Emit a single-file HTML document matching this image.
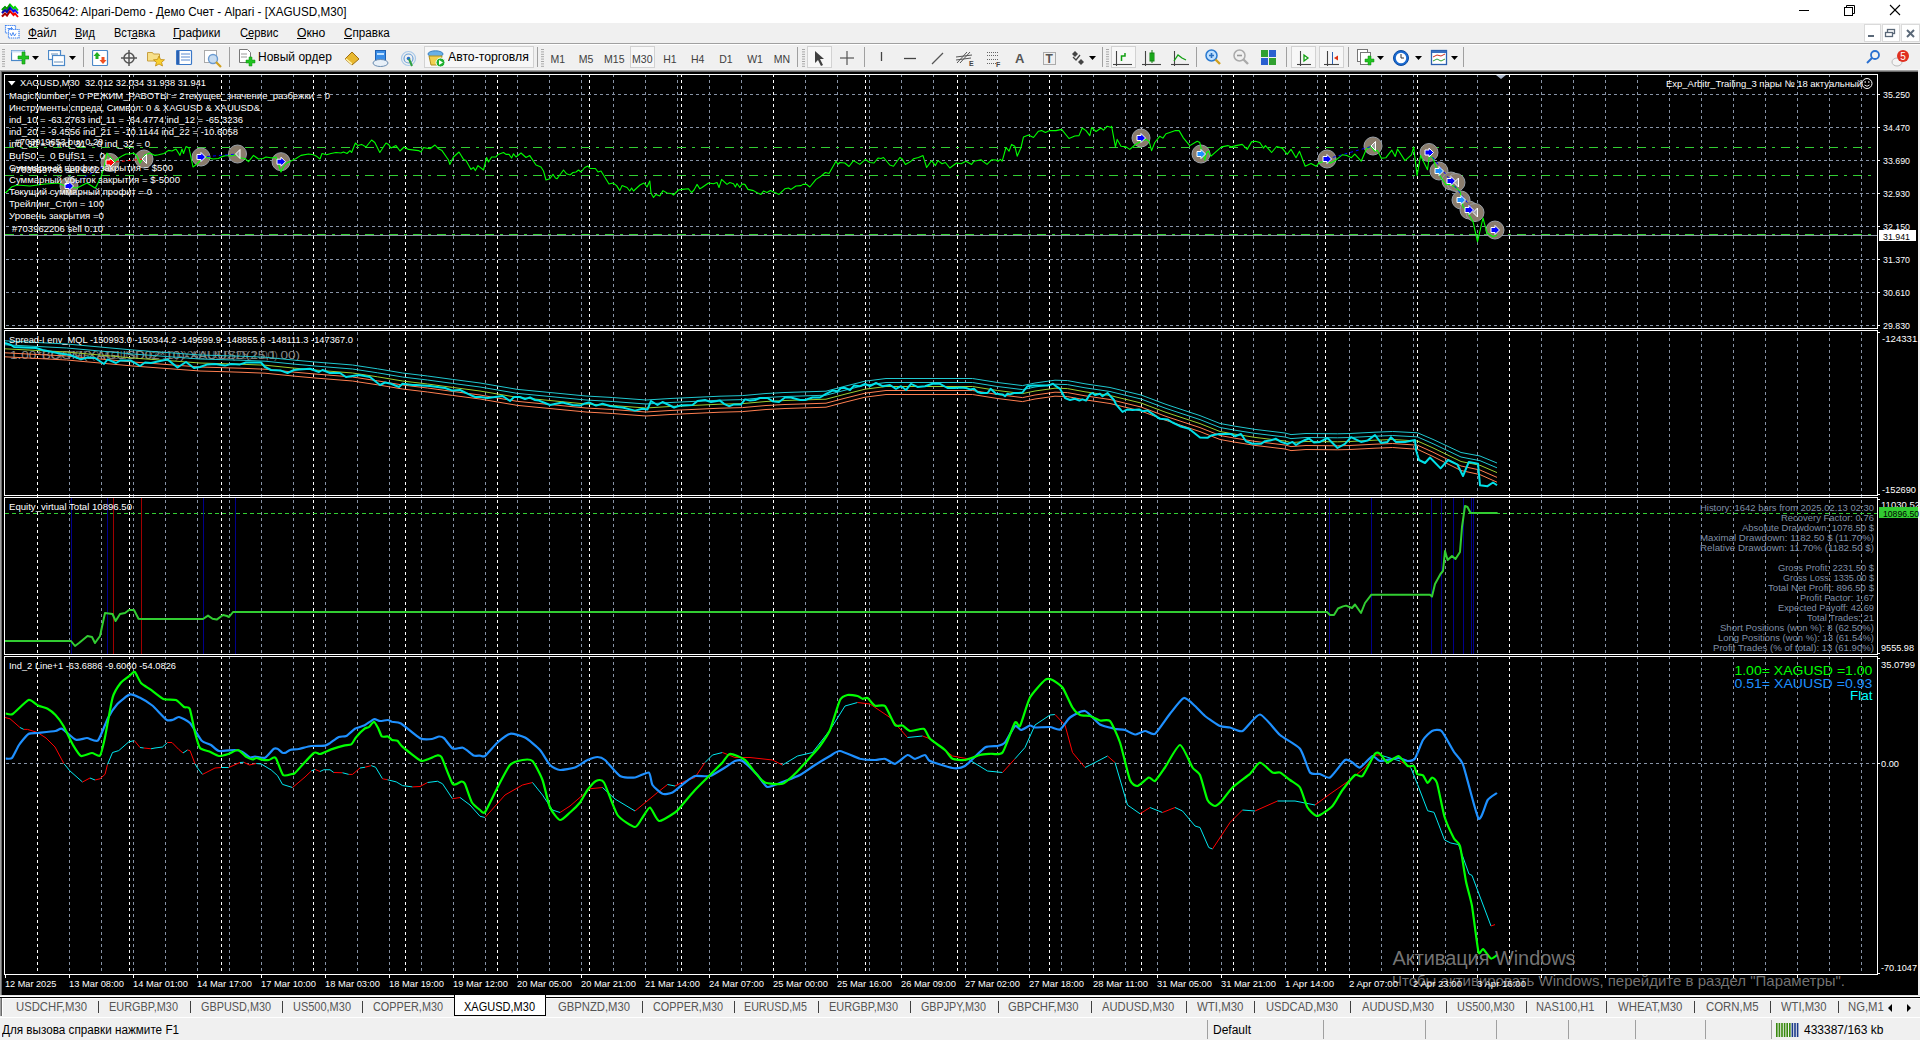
<!DOCTYPE html>
<html><head><meta charset="utf-8"><title>MT4</title>
<style>html,body{margin:0;padding:0;width:1920px;height:1040px;overflow:hidden;background:#f0f0f0;font-family:"Liberation Sans",sans-serif}
svg{display:block} text{white-space:pre}</style></head><body>

<div style="position:absolute;left:0;top:0;width:1920px;height:23px;background:#fff;"></div>
<svg style="position:absolute;left:0px;top:0px" width="22" height="22" viewBox="0 0 22 22">
 <polyline points="2,10 5,7 7,9 10,4.5 13.5,8.5 15,7 18,10.5" fill="none" stroke="#00d800" stroke-width="1.9"/>
 <polyline points="2,13 5,10 7,12 10,7.5 13.5,11.5 15,10 18,13.5" fill="none" stroke="#1010f0" stroke-width="1.9"/>
 <polyline points="2,16.5 5,13.5 7,15.5 10,11 13.5,15 15,13.5 18,17" fill="none" stroke="#f00000" stroke-width="1.9"/>
 <polyline points="2,10 5,7 7,9 10,4.5" fill="none" stroke="#006a00" stroke-width="1.9" stroke-opacity="0.6"/>
 <polyline points="2,13 5,10 7,12 10,7.5" fill="none" stroke="#000070" stroke-width="1.9" stroke-opacity="0.6"/>
 <polyline points="2,16.5 5,13.5 7,15.5 10,11" fill="none" stroke="#700000" stroke-width="1.9" stroke-opacity="0.6"/>
</svg>
<div style="position:absolute;left:23px;top:5px;font:12px 'Liberation Sans', sans-serif;color:#000;white-space:nowrap;transform-origin:0 0;transform:scaleX(0.973)">16350642: Alpari-Demo - Демо Счет - Alpari - [XAGUSD,M30]</div>
<svg style="position:absolute;left:1798px;top:4px" width="14" height="14"><line x1="1" y1="6.5" x2="11" y2="6.5" stroke="#000" stroke-width="1"/></svg>
<svg style="position:absolute;left:1843px;top:4px" width="14" height="14"><rect x="1.5" y="3.5" width="8" height="8" fill="none" stroke="#000"/><polyline points="3.5,3.5 3.5,1.5 11.5,1.5 11.5,9.5 9.5,9.5" fill="none" stroke="#000"/></svg>
<svg style="position:absolute;left:1889px;top:4px" width="14" height="14"><line x1="1" y1="1" x2="11" y2="11" stroke="#000" stroke-width="1.1"/><line x1="11" y1="1" x2="1" y2="11" stroke="#000" stroke-width="1.1"/></svg>

<div style="position:absolute;left:0;top:23px;width:1920px;height:20px;background:#f0f0f0;"></div>
<div style="position:absolute;left:0;top:43px;width:1920px;height:1px;background:#a0a0a0;"></div>
<svg style="position:absolute;left:4px;top:24px" width="16" height="16" viewBox="0 0 16 16">
<rect x="1.5" y="1.5" width="10" height="7.5" fill="#fff" stroke="#3a80f0" stroke-width="1.2" stroke-dasharray="1.3 0.7"/>
<rect x="4.5" y="5.5" width="10.5" height="8.5" fill="#fff" stroke="#3a80f0" stroke-width="1.2" stroke-dasharray="1.3 0.7"/>
<path d="M3.5 4.5h5M7 3l1.5 1.5L7 6" fill="none" stroke="#3a80f0" stroke-width="0.9"/>
<polyline points="6,9 7.5,12 9,8.5 10.5,12 12,9.5" fill="none" stroke="#3a80f0" stroke-width="0.9"/>
</svg>
<div style="position:absolute;left:28px;top:26px;font:12px 'Liberation Sans', sans-serif;color:#000;white-space:nowrap;transform-origin:0 0;transform:scaleX(0.972)">Файл</div>
<div style="position:absolute;left:75px;top:26px;font:12px 'Liberation Sans', sans-serif;color:#000;white-space:nowrap;transform-origin:0 0;transform:scaleX(0.912)">Вид</div>
<div style="position:absolute;left:113.5px;top:26px;font:12px 'Liberation Sans', sans-serif;color:#000;white-space:nowrap;transform-origin:0 0;transform:scaleX(0.921)">Вставка</div>
<div style="position:absolute;left:173px;top:26px;font:12px 'Liberation Sans', sans-serif;color:#000;white-space:nowrap;transform-origin:0 0;transform:scaleX(0.994)">Графики</div>
<div style="position:absolute;left:239.6px;top:26px;font:12px 'Liberation Sans', sans-serif;color:#000;white-space:nowrap;transform-origin:0 0;transform:scaleX(0.935)">Сервис</div>
<div style="position:absolute;left:297px;top:26px;font:12px 'Liberation Sans', sans-serif;color:#000;white-space:nowrap;transform-origin:0 0;transform:scaleX(1.018)">Окно</div>
<div style="position:absolute;left:343.75px;top:26px;font:12px 'Liberation Sans', sans-serif;color:#000;white-space:nowrap;transform-origin:0 0;transform:scaleX(0.974)">Справка</div>
<div style="position:absolute;left:28px;top:38px;width:9px;height:1px;background:#000"></div>
<div style="position:absolute;left:75px;top:38px;width:7px;height:1px;background:#000"></div>
<div style="position:absolute;left:131px;top:38px;width:6px;height:1px;background:#000"></div>
<div style="position:absolute;left:173px;top:38px;width:7px;height:1px;background:#000"></div>
<div style="position:absolute;left:246px;top:38px;width:7px;height:1px;background:#000"></div>
<div style="position:absolute;left:297px;top:38px;width:9px;height:1px;background:#000"></div>
<div style="position:absolute;left:344px;top:38px;width:8px;height:1px;background:#000"></div>
<div style="position:absolute;left:1864px;top:24px;width:17px;height:18px;border:1px solid #dadada;background:#fff;box-sizing:border-box"></div>
<div style="position:absolute;left:1882px;top:24px;width:18px;height:18px;border:1px solid #dadada;background:#fff;box-sizing:border-box"></div>
<div style="position:absolute;left:1901px;top:24px;width:19px;height:18px;border:1px solid #dadada;background:#fff;box-sizing:border-box"></div>
<svg style="position:absolute;left:1860px;top:24px" width="60" height="18"><rect x="8" y="11" width="6" height="2" fill="#5a6878"/><rect x="27.5" y="5.5" width="7" height="4" fill="none" stroke="#5a6878" stroke-width="1.3"/><rect x="25.5" y="8.5" width="7" height="4" fill="#fff" stroke="#5a6878" stroke-width="1.3"/><line x1="47" y1="6" x2="54" y2="13" stroke="#5a6878" stroke-width="2"/><line x1="54" y1="6" x2="47" y2="13" stroke="#5a6878" stroke-width="2"/></svg>
<div style="position:absolute;left:0;top:44px;width:1920px;height:26px;background:#f0f0f0;"></div>
<div style="position:absolute;left:0;top:44px;width:1920px;height:1px;background:#fff;"></div>
<div style="position:absolute;left:0;top:69px;width:1920px;height:1px;background:#f5f5f5;"></div>
<svg style="position:absolute;left:2px;top:48px" width="4" height="20"><line x1="0" y1="1.5" x2="3" y2="1.5" stroke="#a8a8a8"/><line x1="0" y1="3.9" x2="3" y2="3.9" stroke="#a8a8a8"/><line x1="0" y1="6.3" x2="3" y2="6.3" stroke="#a8a8a8"/><line x1="0" y1="8.7" x2="3" y2="8.7" stroke="#a8a8a8"/><line x1="0" y1="11.1" x2="3" y2="11.1" stroke="#a8a8a8"/><line x1="0" y1="13.5" x2="3" y2="13.5" stroke="#a8a8a8"/><line x1="0" y1="15.899999999999999" x2="3" y2="15.899999999999999" stroke="#a8a8a8"/><line x1="0" y1="18.3" x2="3" y2="18.3" stroke="#a8a8a8"/></svg>
<svg style="position:absolute;left:541px;top:48px" width="4" height="20"><line x1="0" y1="1.5" x2="3" y2="1.5" stroke="#a8a8a8"/><line x1="0" y1="3.9" x2="3" y2="3.9" stroke="#a8a8a8"/><line x1="0" y1="6.3" x2="3" y2="6.3" stroke="#a8a8a8"/><line x1="0" y1="8.7" x2="3" y2="8.7" stroke="#a8a8a8"/><line x1="0" y1="11.1" x2="3" y2="11.1" stroke="#a8a8a8"/><line x1="0" y1="13.5" x2="3" y2="13.5" stroke="#a8a8a8"/><line x1="0" y1="15.899999999999999" x2="3" y2="15.899999999999999" stroke="#a8a8a8"/><line x1="0" y1="18.3" x2="3" y2="18.3" stroke="#a8a8a8"/></svg>
<svg style="position:absolute;left:802px;top:48px" width="4" height="20"><line x1="0" y1="1.5" x2="3" y2="1.5" stroke="#a8a8a8"/><line x1="0" y1="3.9" x2="3" y2="3.9" stroke="#a8a8a8"/><line x1="0" y1="6.3" x2="3" y2="6.3" stroke="#a8a8a8"/><line x1="0" y1="8.7" x2="3" y2="8.7" stroke="#a8a8a8"/><line x1="0" y1="11.1" x2="3" y2="11.1" stroke="#a8a8a8"/><line x1="0" y1="13.5" x2="3" y2="13.5" stroke="#a8a8a8"/><line x1="0" y1="15.899999999999999" x2="3" y2="15.899999999999999" stroke="#a8a8a8"/><line x1="0" y1="18.3" x2="3" y2="18.3" stroke="#a8a8a8"/></svg>
<svg style="position:absolute;left:1106px;top:48px" width="4" height="20"><line x1="0" y1="1.5" x2="3" y2="1.5" stroke="#a8a8a8"/><line x1="0" y1="3.9" x2="3" y2="3.9" stroke="#a8a8a8"/><line x1="0" y1="6.3" x2="3" y2="6.3" stroke="#a8a8a8"/><line x1="0" y1="8.7" x2="3" y2="8.7" stroke="#a8a8a8"/><line x1="0" y1="11.1" x2="3" y2="11.1" stroke="#a8a8a8"/><line x1="0" y1="13.5" x2="3" y2="13.5" stroke="#a8a8a8"/><line x1="0" y1="15.899999999999999" x2="3" y2="15.899999999999999" stroke="#a8a8a8"/><line x1="0" y1="18.3" x2="3" y2="18.3" stroke="#a8a8a8"/></svg>
<div style="position:absolute;left:83px;top:47px;width:1px;height:20px;background:#a0a0a0"></div>
<div style="position:absolute;left:229px;top:47px;width:1px;height:20px;background:#a0a0a0"></div>
<div style="position:absolute;left:537px;top:47px;width:1px;height:20px;background:#a0a0a0"></div>
<div style="position:absolute;left:797px;top:47px;width:1px;height:20px;background:#a0a0a0"></div>
<div style="position:absolute;left:864px;top:47px;width:1px;height:20px;background:#a0a0a0"></div>
<div style="position:absolute;left:1102px;top:47px;width:1px;height:20px;background:#a0a0a0"></div>
<div style="position:absolute;left:1196px;top:47px;width:1px;height:20px;background:#a0a0a0"></div>
<div style="position:absolute;left:1286px;top:47px;width:1px;height:20px;background:#a0a0a0"></div>
<div style="position:absolute;left:1348px;top:47px;width:1px;height:20px;background:#a0a0a0"></div>
<div style="position:absolute;left:1463px;top:47px;width:1px;height:20px;background:#a0a0a0"></div>
<svg style="position:absolute;left:32px;top:56px" width="7" height="4"><polygon points="0,0 7,0 3.5,4" fill="#000"/></svg>
<svg style="position:absolute;left:69px;top:56px" width="7" height="4"><polygon points="0,0 7,0 3.5,4" fill="#000"/></svg>
<svg style="position:absolute;left:1089px;top:56px" width="7" height="4"><polygon points="0,0 7,0 3.5,4" fill="#000"/></svg>
<svg style="position:absolute;left:1377px;top:56px" width="7" height="4"><polygon points="0,0 7,0 3.5,4" fill="#000"/></svg>
<svg style="position:absolute;left:1414.5px;top:56px" width="7" height="4"><polygon points="0,0 7,0 3.5,4" fill="#000"/></svg>
<svg style="position:absolute;left:1451px;top:56px" width="7" height="4"><polygon points="0,0 7,0 3.5,4" fill="#000"/></svg>
<div style="position:absolute;left:424px;top:46px;width:110px;height:22px;border:1px solid #d2d2d2;background:#f7f7f7;box-sizing:border-box"></div>
<div style="position:absolute;left:630px;top:46px;width:25px;height:22px;border:1px solid #d2d2d2;background:#f7f7f7;box-sizing:border-box"></div>
<div style="position:absolute;left:807px;top:46px;width:25px;height:22px;border:1px solid #d2d2d2;background:#f7f7f7;box-sizing:border-box"></div>
<div style="position:absolute;left:1111px;top:46px;width:25px;height:22px;border:1px solid #d2d2d2;background:#f7f7f7;box-sizing:border-box"></div>
<div style="position:absolute;left:1291px;top:46px;width:25px;height:22px;border:1px solid #d2d2d2;background:#f7f7f7;box-sizing:border-box"></div>
<div style="position:absolute;left:1319px;top:46px;width:25px;height:22px;border:1px solid #d2d2d2;background:#f7f7f7;box-sizing:border-box"></div>
<div style="position:absolute;left:258px;top:50px;font:12px 'Liberation Sans', sans-serif;color:#000;white-space:nowrap">Новый ордер</div>
<div style="position:absolute;left:448px;top:50px;font:12px 'Liberation Sans', sans-serif;color:#000;white-space:nowrap;transform-origin:0 0;transform:scaleX(1.02)">Авто-торговля</div>
<div style="position:absolute;left:537.7px;width:40px;text-align:center;top:53px;font:10.5px 'Liberation Sans', sans-serif;color:#404040;white-space:nowrap">M1</div>
<div style="position:absolute;left:566px;width:40px;text-align:center;top:53px;font:10.5px 'Liberation Sans', sans-serif;color:#404040;white-space:nowrap">M5</div>
<div style="position:absolute;left:594.3px;width:40px;text-align:center;top:53px;font:10.5px 'Liberation Sans', sans-serif;color:#404040;white-space:nowrap">M15</div>
<div style="position:absolute;left:622.3px;width:40px;text-align:center;top:53px;font:10.5px 'Liberation Sans', sans-serif;color:#404040;white-space:nowrap">M30</div>
<div style="position:absolute;left:650px;width:40px;text-align:center;top:53px;font:10.5px 'Liberation Sans', sans-serif;color:#404040;white-space:nowrap">H1</div>
<div style="position:absolute;left:677.7px;width:40px;text-align:center;top:53px;font:10.5px 'Liberation Sans', sans-serif;color:#404040;white-space:nowrap">H4</div>
<div style="position:absolute;left:706px;width:40px;text-align:center;top:53px;font:10.5px 'Liberation Sans', sans-serif;color:#404040;white-space:nowrap">D1</div>
<div style="position:absolute;left:735px;width:40px;text-align:center;top:53px;font:10.5px 'Liberation Sans', sans-serif;color:#404040;white-space:nowrap">W1</div>
<div style="position:absolute;left:762px;width:40px;text-align:center;top:53px;font:10.5px 'Liberation Sans', sans-serif;color:#404040;white-space:nowrap">MN</div>
<svg style="position:absolute;left:11px;top:50px" width="18" height="17"><rect x="0.5" y="0.5" width="13" height="10" fill="#fff" stroke="#4a88c8" stroke-width="1.2"/><rect x="0.5" y="0.5" width="13" height="2" fill="#cfe0f5"/><path d="M7 6h4v-4h3v4h4v3h-4v5h-3v-5h-4z" fill="#21c321" stroke="#0d8a0d" stroke-width="0.6"/></svg>
<svg style="position:absolute;left:48px;top:50px" width="18" height="17"><rect x="0.5" y="0.5" width="12" height="9" fill="#fff" stroke="#4a88c8" stroke-width="1.2"/><rect x="4.5" y="5.5" width="12" height="10" fill="#fff" stroke="#4a88c8" stroke-width="1.2"/><line x1="3" y1="4" x2="10" y2="4" stroke="#6a90b8"/><line x1="6" y1="12" x2="15" y2="12" stroke="#6a90b8"/></svg>
<svg style="position:absolute;left:92px;top:50px" width="17" height="17"><rect x="0.5" y="0.5" width="15" height="15" rx="1" fill="#fff" stroke="#4a88c8" stroke-width="1.2"/><polygon points="5,2 8.5,6 6.5,6 6.5,9 3.5,9 3.5,6 1.5,6" fill="#20b020"/><polygon points="11,14 14.5,10 12.5,10 12.5,7 9.5,7 9.5,10 7.5,10" fill="#f05020"/></svg>
<svg style="position:absolute;left:121px;top:50px" width="16" height="16"><circle cx="8" cy="8" r="5" fill="none" stroke="#555" stroke-width="1.5"/><line x1="8" y1="0" x2="8" y2="16" stroke="#555" stroke-width="1.5"/><line x1="0" y1="8" x2="16" y2="8" stroke="#555" stroke-width="1.5"/></svg>
<svg style="position:absolute;left:147px;top:50px" width="19" height="18"><path d="M0.5 2.5h5l1 1.5h6v7h-12z" fill="#f8e08a" stroke="#c8a040"/><polygon points="12,6 13.6,9.5 17.5,9.8 14.6,12.3 15.5,16 12,14 8.5,16 9.4,12.3 6.5,9.8 10.4,9.5" fill="#f8d030" stroke="#c08a10" stroke-width="0.8"/></svg>
<svg style="position:absolute;left:176px;top:50px" width="17" height="16"><rect x="0.5" y="0.5" width="15" height="14" rx="1" fill="#fff" stroke="#3a78c8" stroke-width="1.2"/><rect x="1" y="1" width="2.5" height="13" fill="#2a60b0"/><line x1="5" y1="4" x2="14" y2="4" stroke="#5a8ad0"/><line x1="5" y1="7" x2="14" y2="7" stroke="#5a8ad0"/><line x1="5" y1="10" x2="14" y2="10" stroke="#5a8ad0"/></svg>
<svg style="position:absolute;left:204px;top:50px" width="19" height="18"><rect x="0.5" y="0.5" width="12" height="12" fill="#fff" stroke="#aaa"/><circle cx="9" cy="9" r="4.5" fill="#c8dcf0" stroke="#6a9ad0" stroke-width="1.4"/><line x1="12" y1="12" x2="17" y2="17" stroke="#d0a020" stroke-width="2.2"/></svg>
<svg style="position:absolute;left:239px;top:49px" width="17" height="19"><path d="M0.5 0.5h8l3 3v10h-11z" fill="#fff" stroke="#777"/><line x1="2" y1="5" x2="8" y2="5" stroke="#999"/><line x1="2" y1="8" x2="8" y2="8" stroke="#999"/><path d="M7 11h3v-3h3v3h3v3h-3v3h-3v-3h-3z" fill="#21c321" stroke="#0d8a0d" stroke-width="0.5"/></svg>
<svg style="position:absolute;left:344px;top:51px" width="16" height="15"><polygon points="1,8 8,1 15,8 8,14" fill="#e8b830" stroke="#a07010"/><polygon points="1,8 8,14 8,12 2.5,7.5" fill="#fff3b0"/></svg>
<svg style="position:absolute;left:372px;top:50px" width="17" height="17"><rect x="3.5" y="0.5" width="10" height="10" fill="#3a8ee8" stroke="#2060b0"/><rect x="5" y="3" width="7" height="2" fill="#bfe0ff"/><ellipse cx="8.5" cy="13" rx="7.5" ry="3.5" fill="#e8f0f8" stroke="#6a8cb0"/></svg>
<svg style="position:absolute;left:400px;top:50px" width="17" height="17"><circle cx="8.5" cy="8.5" r="7" fill="none" stroke="#a8c8e8" stroke-width="1.2"/><circle cx="8.5" cy="8.5" r="4.5" fill="none" stroke="#6aa0d8" stroke-width="1.2"/><circle cx="8.5" cy="8.5" r="1.8" fill="#2a70c8"/><path d="M9 9 L12 16" stroke="#30a040" stroke-width="2"/></svg>
<svg style="position:absolute;left:427px;top:49px" width="19" height="19"><ellipse cx="8.5" cy="5" rx="7.5" ry="3.2" fill="#68b0e8" stroke="#3a80c0"/><path d="M2 7 h13 l-2 9 h-9z" fill="#f0d050" stroke="#b09020"/><circle cx="13.5" cy="13.5" r="4.5" fill="#20b030" stroke="#fff"/><polygon points="12,11 16,13.5 12,16" fill="#fff"/></svg>
<svg style="position:absolute;left:814px;top:50px" width="12" height="17"><polygon points="1,1 1,13 4,10 7,16 9,15 6,9 10,9" fill="#404040"/></svg>
<svg style="position:absolute;left:839px;top:50px" width="16" height="16"><line x1="8" y1="1" x2="8" y2="15" stroke="#555" stroke-width="1.2"/><line x1="1" y1="8" x2="15" y2="8" stroke="#555" stroke-width="1.2"/></svg>
<svg style="position:absolute;left:875px;top:50px" width="220" height="18"><line x1="6.5" y1="2" x2="6.5" y2="11" stroke="#444" stroke-width="1.3"/><line x1="29" y1="8.5" x2="41" y2="8.5" stroke="#444" stroke-width="1.3"/><line x1="57" y1="14" x2="68" y2="3" stroke="#555" stroke-width="1.2"/><g stroke="#555" stroke-width="1"><line x1="82" y1="13" x2="92" y2="2"/><line x1="85" y1="13" x2="95" y2="2"/><line x1="81" y1="7" x2="97" y2="5"/><line x1="81" y1="10" x2="96" y2="8"/></g><text x="94" y="16" font-family="Liberation Sans" font-size="7" font-weight="bold" fill="#444">E</text><g stroke="#666" stroke-dasharray="1 1"><line x1="112" y1="2.5" x2="124" y2="2.5"/><line x1="112" y1="5.5" x2="124" y2="5.5"/><line x1="112" y1="9.5" x2="124" y2="9.5"/><line x1="112" y1="13.5" x2="121" y2="13.5"/></g><text x="121" y="17" font-family="Liberation Sans" font-size="7" font-weight="bold" fill="#444">F</text><text x="140" y="13" font-family="Liberation Sans" font-size="13" font-weight="bold" fill="#555">A</text><rect x="168.5" y="2.5" width="12" height="12" fill="none" stroke="#666" stroke-dasharray="1 1"/><text x="170.5" y="13" font-family="Liberation Sans" font-size="12" font-weight="bold" fill="#555">T</text><polygon points="197,4 200,1 203,4 200,7" fill="#444"/><polyline points="198,7 201,10 205,5" fill="none" stroke="#444" stroke-width="1.3"/><polygon points="203,12 206,9 209,12 206,15" fill="#444"/></svg>
<svg style="position:absolute;left:1112px;top:50px" width="80" height="18"><g stroke="#444" stroke-width="1.1"><line x1="4.5" y1="1" x2="4.5" y2="16"/><line x1="1" y1="14.5" x2="20" y2="14.5"/></g><polyline points="9.5,11 9.5,6 13,6 13,3" fill="none" stroke="#10a010" stroke-width="1.5"/><g stroke="#444" stroke-width="1.1"><line x1="33.5" y1="1" x2="33.5" y2="16"/><line x1="30" y1="14.5" x2="49" y2="14.5"/></g><rect x="38" y="3" width="4" height="8" fill="#22cc22" stroke="#108010"/><line x1="40" y1="0" x2="40" y2="13" stroke="#108010"/><g stroke="#444" stroke-width="1.1"><line x1="62.5" y1="1" x2="62.5" y2="16"/><line x1="59" y1="14.5" x2="77" y2="14.5"/></g><polyline points="62,11 66,5 70,8 74,10" fill="none" stroke="#10a010" stroke-width="1.3"/></svg>
<svg style="position:absolute;left:1205px;top:49px" width="80" height="19"><circle cx="6.5" cy="6.5" r="5.5" fill="#bfe0ff" stroke="#2a7ad0" stroke-width="1.5"/><path d="M4 6.5h5M6.5 4v5" stroke="#2a70c0" stroke-width="1.6"/><line x1="10.5" y1="10.5" x2="15" y2="15" stroke="#d0a020" stroke-width="2.4"/><circle cx="34.5" cy="6.5" r="5.5" fill="#f0f0f0" stroke="#aaa" stroke-width="1.5"/><path d="M32 6.5h5" stroke="#999" stroke-width="1.6"/><line x1="38.5" y1="10.5" x2="43" y2="15" stroke="#aaa" stroke-width="2.4"/><rect x="56" y="1" width="7" height="7" fill="#30a030"/><rect x="64" y="1" width="7" height="7" fill="#2a60d0"/><rect x="56" y="9" width="7" height="7" fill="#2a60d0"/><rect x="64" y="9" width="7" height="7" fill="#30a030"/></svg>
<svg style="position:absolute;left:1296px;top:50px" width="50" height="18"><g stroke="#444" stroke-width="1.1"><line x1="4.5" y1="1" x2="4.5" y2="16"/><line x1="1" y1="14.5" x2="15" y2="14.5"/></g><polygon points="8,5 8,11 12,8" fill="none" stroke="#10a010" stroke-width="1.3"/><g stroke="#444" stroke-width="1.1"><line x1="31.5" y1="1" x2="31.5" y2="16"/><line x1="28" y1="14.5" x2="43" y2="14.5"/></g><line x1="36.5" y1="2" x2="36.5" y2="14" stroke="#2a60b0"/><polygon points="38,8 42,5.5 42,10.5" fill="#e03010"/></svg>
<svg style="position:absolute;left:1357px;top:49px" width="100" height="19"><rect x="0.5" y="0.5" width="10" height="12" fill="#fff" stroke="#777"/><rect x="3.5" y="3.5" width="10" height="12" fill="#fff" stroke="#777"/><path d="M8 10h3v-3h3v3h3v3h-3v3h-3v-3h-3z" fill="#21c321" stroke="#0d8a0d" stroke-width="0.5"/><circle cx="44" cy="9" r="7.5" fill="#1a6ad0" stroke="#0a4aa0"/><circle cx="44" cy="9" r="5.2" fill="#fff"/><path d="M44 5v4h3" stroke="#333" fill="none"/><rect x="74.5" y="1.5" width="15" height="14" fill="#fff" stroke="#2a60b0" stroke-width="1.3"/><rect x="75" y="2" width="14" height="2" fill="#3a70c0"/><polyline points="76,8 80,6 84,7 88,5" fill="none" stroke="#d03020"/><polyline points="76,12 80,10 84,12 88,10" fill="none" stroke="#30a030"/></svg>
<svg style="position:absolute;left:1864px;top:49px" width="56" height="20"><circle cx="11" cy="6" r="4" fill="none" stroke="#2a70d0" stroke-width="1.8"/><line x1="8" y1="9" x2="3" y2="14" stroke="#2a70d0" stroke-width="2"/><ellipse cx="33" cy="13" rx="5" ry="4" fill="#f4f4f4" stroke="#bbb"/><circle cx="39" cy="7" r="6" fill="#e03020"/><text x="36.2" y="11" font-family="Liberation Sans" font-size="10" fill="#fff">5</text></svg>
<svg style="position:absolute;left:0;top:0" width="1920" height="1040" viewBox="0 0 1920 1040">
<defs><clipPath id="c1"><rect x="5" y="75" width="1872" height="253"/></clipPath>
<clipPath id="c2"><rect x="5" y="331" width="1872" height="164"/></clipPath>
<clipPath id="c3"><rect x="5" y="498" width="1872" height="156"/></clipPath>
<clipPath id="c4"><rect x="5" y="657" width="1872" height="317"/></clipPath></defs>
<rect x="0" y="70" width="1920" height="927" fill="#000"/>
<rect x="0" y="70" width="1918" height="1" fill="#a0a0a0"/><rect x="1" y="71" width="1917" height="1" fill="#696969"/>
<rect x="0" y="70" width="1" height="926" fill="#a0a0a0"/><rect x="1" y="71" width="1" height="924" fill="#696969"/>
<rect x="1918" y="70" width="2" height="927" fill="#f0f0f0"/>
<rect x="0" y="995" width="1920" height="1" fill="#e3e3e3"/><rect x="0" y="996" width="1920" height="1" fill="#fff"/>
<path d="M69.5 74V328M101.5 74V328M133.5 74V328M165.5 74V328M197.5 74V328M229.5 74V328M261.5 74V328M293.5 74V328M325.5 74V328M357.5 74V328M389.5 74V328M421.5 74V328M453.5 74V328M485.5 74V328M517.5 74V328M549.5 74V328M581.5 74V328M613.5 74V328M645.5 74V328M677.5 74V328M709.5 74V328M741.5 74V328M805.5 74V328M837.5 74V328M869.5 74V328M901.5 74V328M933.5 74V328M965.5 74V328M997.5 74V328M1029.5 74V328M1061.5 74V328M1093.5 74V328M1125.5 74V328M1157.5 74V328M1189.5 74V328M1221.5 74V328M1253.5 74V328M1285.5 74V328M1317.5 74V328M1349.5 74V328M1381.5 74V328M1413.5 74V328M1445.5 74V328M1477.5 74V328M1541.5 74V328M1573.5 74V328M1605.5 74V328M1637.5 74V328M1669.5 74V328M1701.5 74V328M1733.5 74V328M1765.5 74V328M1797.5 74V328M1829.5 74V328M1861.5 74V328" stroke="#8793a6" stroke-width="1" stroke-dasharray="3 3" shape-rendering="crispEdges"/>
<path d="M37.5 74V328M129.5 74V328M221.5 74V328M313.5 74V328M405.5 74V328M497.5 74V328M589.5 74V328M681.5 74V328M773.5 74V328M865.5 74V328M957.5 74V328M1049.5 74V328M1141.5 74V328M1233.5 74V328M1325.5 74V328M1417.5 74V328M1509.5 74V328" stroke="#fff" stroke-width="1" stroke-dasharray="3 3" shape-rendering="crispEdges"/>
<path d="M69.5 326V495M101.5 326V495M133.5 326V495M165.5 326V495M197.5 326V495M229.5 326V495M261.5 326V495M293.5 326V495M325.5 326V495M357.5 326V495M389.5 326V495M421.5 326V495M453.5 326V495M485.5 326V495M517.5 326V495M549.5 326V495M581.5 326V495M613.5 326V495M645.5 326V495M677.5 326V495M709.5 326V495M741.5 326V495M805.5 326V495M837.5 326V495M869.5 326V495M901.5 326V495M933.5 326V495M965.5 326V495M997.5 326V495M1029.5 326V495M1061.5 326V495M1093.5 326V495M1125.5 326V495M1157.5 326V495M1189.5 326V495M1221.5 326V495M1253.5 326V495M1285.5 326V495M1317.5 326V495M1349.5 326V495M1381.5 326V495M1413.5 326V495M1445.5 326V495M1477.5 326V495M1541.5 326V495M1573.5 326V495M1605.5 326V495M1637.5 326V495M1669.5 326V495M1701.5 326V495M1733.5 326V495M1765.5 326V495M1797.5 326V495M1829.5 326V495M1861.5 326V495" stroke="#8793a6" stroke-width="1" stroke-dasharray="3 3" shape-rendering="crispEdges"/>
<path d="M37.5 326V495M129.5 326V495M221.5 326V495M313.5 326V495M405.5 326V495M497.5 326V495M589.5 326V495M681.5 326V495M773.5 326V495M865.5 326V495M957.5 326V495M1049.5 326V495M1141.5 326V495M1233.5 326V495M1325.5 326V495M1417.5 326V495M1509.5 326V495" stroke="#fff" stroke-width="1" stroke-dasharray="3 3" shape-rendering="crispEdges"/>
<path d="M69.5 494V654M101.5 494V654M133.5 494V654M165.5 494V654M197.5 494V654M229.5 494V654M261.5 494V654M293.5 494V654M325.5 494V654M357.5 494V654M389.5 494V654M421.5 494V654M453.5 494V654M485.5 494V654M517.5 494V654M549.5 494V654M581.5 494V654M613.5 494V654M645.5 494V654M677.5 494V654M709.5 494V654M741.5 494V654M805.5 494V654M837.5 494V654M869.5 494V654M901.5 494V654M933.5 494V654M965.5 494V654M997.5 494V654M1029.5 494V654M1061.5 494V654M1093.5 494V654M1125.5 494V654M1157.5 494V654M1189.5 494V654M1221.5 494V654M1253.5 494V654M1285.5 494V654M1317.5 494V654M1349.5 494V654M1381.5 494V654M1413.5 494V654M1445.5 494V654M1477.5 494V654M1541.5 494V654M1573.5 494V654M1605.5 494V654M1637.5 494V654M1669.5 494V654M1701.5 494V654M1733.5 494V654M1765.5 494V654M1797.5 494V654M1829.5 494V654M1861.5 494V654" stroke="#8793a6" stroke-width="1" stroke-dasharray="3 3" shape-rendering="crispEdges"/>
<path d="M37.5 494V654M129.5 494V654M221.5 494V654M313.5 494V654M405.5 494V654M497.5 494V654M589.5 494V654M681.5 494V654M773.5 494V654M865.5 494V654M957.5 494V654M1049.5 494V654M1141.5 494V654M1233.5 494V654M1325.5 494V654M1417.5 494V654M1509.5 494V654" stroke="#fff" stroke-width="1" stroke-dasharray="3 3" shape-rendering="crispEdges"/>
<path d="M69.5 656V974M101.5 656V974M133.5 656V974M165.5 656V974M197.5 656V974M229.5 656V974M261.5 656V974M293.5 656V974M325.5 656V974M357.5 656V974M389.5 656V974M421.5 656V974M453.5 656V974M485.5 656V974M517.5 656V974M549.5 656V974M581.5 656V974M613.5 656V974M645.5 656V974M677.5 656V974M709.5 656V974M741.5 656V974M805.5 656V974M837.5 656V974M869.5 656V974M901.5 656V974M933.5 656V974M965.5 656V974M997.5 656V974M1029.5 656V974M1061.5 656V974M1093.5 656V974M1125.5 656V974M1157.5 656V974M1189.5 656V974M1221.5 656V974M1253.5 656V974M1285.5 656V974M1317.5 656V974M1349.5 656V974M1381.5 656V974M1413.5 656V974M1445.5 656V974M1477.5 656V974M1541.5 656V974M1573.5 656V974M1605.5 656V974M1637.5 656V974M1669.5 656V974M1701.5 656V974M1733.5 656V974M1765.5 656V974M1797.5 656V974M1829.5 656V974M1861.5 656V974" stroke="#8793a6" stroke-width="1" stroke-dasharray="3 3" shape-rendering="crispEdges"/>
<path d="M37.5 656V974M129.5 656V974M221.5 656V974M313.5 656V974M405.5 656V974M497.5 656V974M589.5 656V974M681.5 656V974M773.5 656V974M865.5 656V974M957.5 656V974M1049.5 656V974M1141.5 656V974M1233.5 656V974M1325.5 656V974M1417.5 656V974M1509.5 656V974" stroke="#fff" stroke-width="1" stroke-dasharray="3 3" shape-rendering="crispEdges"/>
<path d="M5 94.5H1877M5 127.5H1877M5 160.5H1877M5 193.5H1877M5 226.5H1877M5 259.5H1877M5 292.5H1877M5 325.5H1877" stroke="#8793a6" stroke-width="1" stroke-dasharray="3 3" stroke-dashoffset="5" shape-rendering="crispEdges"/>
<path d="M5 763.5H1877" stroke="#8793a6" stroke-width="1" stroke-dasharray="3 3" stroke-dashoffset="5" shape-rendering="crispEdges"/>
<g clip-path="url(#c1)"><line x1="5" y1="147.5" x2="1877" y2="147.5" stroke="#32cd32" stroke-width="1" stroke-dasharray="9 6 3 6" shape-rendering="crispEdges"/>
<line x1="5" y1="175.5" x2="1877" y2="175.5" stroke="#32cd32" stroke-width="1" stroke-dasharray="9 6 3 6" shape-rendering="crispEdges"/>
<line x1="5" y1="235.5" x2="1877" y2="235.5" stroke="#8c96a6" stroke-width="1" shape-rendering="crispEdges"/>
<line x1="5" y1="234.5" x2="1877" y2="234.5" stroke="#32cd32" stroke-width="1" stroke-dasharray="9 6 3 6" shape-rendering="crispEdges"/>
<circle cx="69" cy="186" r="9" fill="#8a7c6c" stroke="#9aa0a8" stroke-width="1"/>
<circle cx="110" cy="162.5" r="9" fill="#8a7c6c" stroke="#9aa0a8" stroke-width="1"/>
<circle cx="144" cy="159" r="9" fill="#8a7c6c" stroke="#9aa0a8" stroke-width="1"/>
<circle cx="201" cy="157" r="9" fill="#8a7c6c" stroke="#9aa0a8" stroke-width="1"/>
<circle cx="237.5" cy="154" r="9" fill="#8a7c6c" stroke="#9aa0a8" stroke-width="1"/>
<circle cx="281" cy="161.7" r="9" fill="#8a7c6c" stroke="#9aa0a8" stroke-width="1"/>
<circle cx="1141" cy="138" r="9" fill="#8a7c6c" stroke="#9aa0a8" stroke-width="1"/>
<circle cx="1201" cy="154" r="9" fill="#8a7c6c" stroke="#9aa0a8" stroke-width="1"/>
<circle cx="1327" cy="159" r="9" fill="#8a7c6c" stroke="#9aa0a8" stroke-width="1"/>
<circle cx="1373" cy="146" r="9" fill="#8a7c6c" stroke="#9aa0a8" stroke-width="1"/>
<circle cx="1429" cy="152.5" r="9" fill="#8a7c6c" stroke="#9aa0a8" stroke-width="1"/>
<circle cx="1439" cy="171" r="9" fill="#8a7c6c" stroke="#9aa0a8" stroke-width="1"/>
<circle cx="1451" cy="181" r="9" fill="#8a7c6c" stroke="#9aa0a8" stroke-width="1"/>
<circle cx="1456" cy="182.5" r="9" fill="#8a7c6c" stroke="#9aa0a8" stroke-width="1"/>
<circle cx="1461" cy="200" r="9" fill="#8a7c6c" stroke="#9aa0a8" stroke-width="1"/>
<circle cx="1469" cy="210" r="9" fill="#8a7c6c" stroke="#9aa0a8" stroke-width="1"/>
<circle cx="1475" cy="212.5" r="9" fill="#8a7c6c" stroke="#9aa0a8" stroke-width="1"/>
<circle cx="1495" cy="230" r="9" fill="#8a7c6c" stroke="#9aa0a8" stroke-width="1"/>
<polyline points="5.0,192.5 6.0,192.5 12.0,186.7 17.0,185.0 30.0,186.0 45.0,184.0 58.0,183.0 67.0,186.7 77.0,188.0 87.0,183.0 95.0,188.0 96.0,187.0 101.0,177.0 104.0,167.0 107.0,153.0 111.0,158.0 113.5,162.0 118.0,158.5 123.0,155.4 126.0,154.0 130.0,154.0 133.5,153.0 137.0,156.0 140.0,163.0 145.0,155.0 150.0,153.0 155.0,155.4 158.5,154.8 164.0,153.5 168.5,150.4 172.0,151.0 176.0,149.0 180.0,155.4 182.0,149.0 183.5,153.5 186.0,146.6 189.0,148.0 193.0,167.0 196.0,164.8 200.0,161.0 205.0,157.0 209.0,158.0 213.0,159.0 218.5,158.5 222.0,156.6 226.6,155.4 231.0,156.0 236.0,154.8 241.0,158.0 245.0,158.5 248.5,161.6 253.5,155.4 258.5,159.0 263.0,158.5 266.0,157.0 272.0,158.0 276.0,157.0 281.0,172.0 283.5,167.0 286.6,163.0 291.0,161.0 296.0,158.5 301.0,155.4 308.5,154.0 313.5,154.8 317.0,156.6 320.0,159.0 322.0,153.5 326.6,154.8 331.0,153.5 336.0,152.5 341.0,153.0 343.5,152.0 347.0,153.5 350.0,150.6 351.6,152.5 355.4,143.0 358.0,145.6 361.6,144.4 366.0,147.0 371.6,140.0 374.8,142.5 379.8,152.5 386.0,143.0 388.5,144.4 391.0,148.0 396.0,145.6 400.0,151.0 404.0,147.0 408.5,149.4 418.5,150.6 421.0,152.0 423.5,147.5 426.0,148.0 430.0,148.8 435.0,145.0 438.5,148.8 442.0,150.6 448.5,160.0 449.8,164.4 453.5,157.0 459.0,152.0 463.5,159.4 466.0,160.6 471.0,169.4 473.5,167.5 475.4,170.6 478.0,165.6 483.5,170.0 486.6,157.5 488.5,162.0 491.6,157.0 496.0,157.0 498.0,154.4 503.5,152.5 506.0,154.4 509.0,154.4 511.6,158.0 513.5,153.8 516.0,157.0 521.0,153.0 526.0,157.5 529.8,155.6 536.0,165.0 541.0,167.0 543.5,171.0 546.0,180.0 549.8,178.8 553.0,174.4 555.4,178.0 557.0,178.8 559.8,175.0 563.5,170.0 566.6,173.8 570.0,175.0 573.0,172.5 576.0,172.0 578.5,170.0 581.0,172.0 584.8,167.5 588.0,166.0 590.0,168.5 595.4,168.5 598.0,172.0 601.0,171.0 609.0,184.0 613.0,183.0 616.6,185.6 619.8,190.6 622.0,185.6 627.0,187.5 629.8,191.0 631.6,188.0 633.5,191.0 640.0,185.0 644.0,183.0 647.0,187.0 649.8,181.0 651.0,193.0 653.5,197.5 656.0,194.4 659.8,196.0 663.0,190.6 667.0,193.0 672.0,193.8 673.5,195.0 678.5,190.0 682.0,189.4 688.5,188.8 691.6,192.5 694.0,190.0 697.0,184.4 699.8,188.8 702.0,187.5 708.5,183.0 713.5,183.8 717.0,182.5 719.0,187.5 721.6,179.4 727.0,184.4 729.8,182.5 733.5,183.8 735.4,187.0 737.0,183.5 739.8,187.5 742.0,184.0 744.8,184.4 748.0,189.4 753.5,190.6 756.6,192.5 761.0,194.4 763.5,191.0 767.0,192.5 770.4,190.6 773.5,192.0 776.0,193.0 779.0,194.4 784.8,188.8 788.5,188.0 791.0,189.4 796.0,186.0 801.0,185.6 803.0,184.4 806.6,184.4 809.8,187.0 816.0,179.4 821.0,176.2 825.4,172.5 829.0,173.5 836.0,161.2 838.0,164.4 839.8,162.5 844.8,163.0 849.0,166.5 853.5,160.6 859.8,164.4 865.4,159.4 869.8,162.5 874.0,163.0 878.0,158.0 881.0,158.5 883.5,157.5 889.8,165.0 893.5,166.2 899.8,157.5 902.0,158.8 905.4,164.4 911.0,161.2 913.5,158.8 918.5,157.5 923.0,155.6 926.6,167.5 931.6,160.6 935.4,165.6 938.0,160.6 942.0,163.8 945.4,162.5 949.8,168.0 956.6,163.0 961.0,163.8 966.0,161.2 971.6,164.4 974.0,161.2 981.0,159.8 987.0,164.4 991.6,159.8 996.0,160.0 998.0,161.2 1000.4,159.4 1002.2,161.2 1006.0,147.5 1009.0,151.2 1011.6,144.4 1014.8,146.2 1017.2,156.2 1021.0,147.5 1023.5,136.9 1028.5,135.0 1033.5,137.5 1038.5,131.2 1041.6,130.6 1045.4,132.5 1049.8,130.6 1056.0,130.6 1061.6,129.4 1069.0,138.5 1074.8,136.0 1079.0,135.6 1082.2,128.0 1086.0,130.6 1089.8,135.6 1091.6,127.5 1096.0,131.5 1101.0,128.0 1103.5,130.2 1107.2,126.2 1111.0,127.5 1111.6,126.2 1115.4,146.9 1117.2,139.4 1121.0,146.2 1126.0,146.9 1129.8,149.4 1134.8,145.0 1141.0,141.2 1146.0,139.4 1149.0,141.2 1151.6,150.6 1154.8,142.5 1159.8,136.2 1162.9,138.1 1166.0,133.8 1169.8,132.5 1175.4,130.6 1179.1,130.6 1183.5,138.1 1189.8,145.6 1197.2,141.2 1199.8,142.5 1201.0,148.1 1204.8,160.0 1206.6,152.5 1208.5,151.2 1211.0,156.2 1217.2,150.6 1221.6,146.9 1227.9,145.6 1231.6,146.9 1236.0,145.6 1242.2,144.4 1247.2,149.4 1251.6,141.9 1255.4,141.2 1259.8,142.5 1263.5,148.1 1265.4,145.6 1271.6,152.5 1276.6,146.5 1282.2,148.1 1287.2,154.4 1291.0,149.4 1296.0,157.7 1299.5,151.3 1305.2,166.3 1311.0,163.5 1316.2,166.3 1319.0,162.9 1323.7,161.2 1330.6,162.9 1335.2,160.6 1342.2,154.8 1346.8,155.4 1351.4,157.7 1354.8,154.2 1361.2,161.2 1366.4,149.0 1371.0,146.2 1374.5,151.3 1377.3,150.2 1381.4,158.3 1386.0,157.7 1391.8,150.2 1395.2,156.5 1397.5,149.0 1405.0,160.6 1411.4,154.8 1413.7,147.3 1417.1,175.6 1420.6,155.4 1427.5,169.8 1429.3,156.5 1432.7,157.7 1436.8,169.2 1440.2,176.2 1446.0,184.8 1450.6,184.2 1456.0,187.7 1460.0,191.7 1463.0,206.7 1468.0,213.0 1473.0,221.7 1477.5,241.7 1483.0,218.0 1487.0,233.0 1493.0,236.7 1497.0,235.0" fill="none" stroke="#00ff00" stroke-width="1.1" stroke-linejoin="round"/>
<line x1="69" y1="186" x2="110" y2="162.5" stroke="#0000ff" stroke-width="1" stroke-dasharray="3 3"/>
<line x1="110" y1="162.5" x2="144" y2="159" stroke="#ff0000" stroke-width="1" stroke-dasharray="3 3"/>
<line x1="201" y1="157" x2="237.5" y2="154" stroke="#0000ff" stroke-width="1" stroke-dasharray="3 3"/>
<line x1="1327" y1="159" x2="1373" y2="146" stroke="#0000ff" stroke-width="1" stroke-dasharray="3 3"/>
<line x1="1429" y1="152.5" x2="1475" y2="212.5" stroke="#0000ff" stroke-width="1" stroke-dasharray="3 3"/>
<polygon points="65,183.5 69,183.5 69,181.5 73.5,186 69,190.5 69,188.5 65,188.5" fill="#0000ff" stroke="#fff" stroke-width="1"/>
<polygon points="106,160.0 110,160.0 110,158.0 114.5,162.5 110,167.0 110,165.0 106,165.0" fill="#ff0000" stroke="#fff" stroke-width="1"/>
<polygon points="146.5,154.5 146.5,163.5 142,159" fill="#a0a0a0" stroke="#fff" stroke-width="1"/>
<polygon points="197,154.5 201,154.5 201,152.5 205.5,157 201,161.5 201,159.5 197,159.5" fill="#0000ff" stroke="#fff" stroke-width="1"/>
<polygon points="240.0,149.5 240.0,158.5 235.5,154" fill="#a0a0a0" stroke="#fff" stroke-width="1"/>
<polygon points="277,159.2 281,159.2 281,157.2 285.5,161.7 281,166.2 281,164.2 277,164.2" fill="#0000ff" stroke="#fff" stroke-width="1"/>
<polygon points="1137,135.5 1141,135.5 1141,133.5 1145.5,138 1141,142.5 1141,140.5 1137,140.5" fill="#0000ff" stroke="#fff" stroke-width="1"/>
<polygon points="1197,151.5 1201,151.5 1201,149.5 1205.5,154 1201,158.5 1201,156.5 1197,156.5" fill="#1e90ff" stroke="#fff" stroke-width="1"/>
<polygon points="1323,156.5 1327,156.5 1327,154.5 1331.5,159 1327,163.5 1327,161.5 1323,161.5" fill="#0000ff" stroke="#fff" stroke-width="1"/>
<polygon points="1375.5,141.5 1375.5,150.5 1371,146" fill="#a0a0a0" stroke="#fff" stroke-width="1"/>
<polygon points="1425,150.0 1429,150.0 1429,148.0 1433.5,152.5 1429,157.0 1429,155.0 1425,155.0" fill="#0000ff" stroke="#fff" stroke-width="1"/>
<polygon points="1435,168.5 1439,168.5 1439,166.5 1443.5,171 1439,175.5 1439,173.5 1435,173.5" fill="#1e90ff" stroke="#fff" stroke-width="1"/>
<polygon points="1447,178.5 1451,178.5 1451,176.5 1455.5,181 1451,185.5 1451,183.5 1447,183.5" fill="#0000ff" stroke="#fff" stroke-width="1"/>
<polygon points="1458.5,178.0 1458.5,187.0 1454,182.5" fill="#a0a0a0" stroke="#fff" stroke-width="1"/>
<polygon points="1457,197.5 1461,197.5 1461,195.5 1465.5,200 1461,204.5 1461,202.5 1457,202.5" fill="#1e90ff" stroke="#fff" stroke-width="1"/>
<polygon points="1465,207.5 1469,207.5 1469,205.5 1473.5,210 1469,214.5 1469,212.5 1465,212.5" fill="#0000ff" stroke="#fff" stroke-width="1"/>
<polygon points="1477.5,208.0 1477.5,217.0 1473,212.5" fill="#a0a0a0" stroke="#fff" stroke-width="1"/>
<polygon points="1491,227.5 1495,227.5 1495,225.5 1499.5,230 1495,234.5 1495,232.5 1491,232.5" fill="#0000ff" stroke="#fff" stroke-width="1"/>
<polygon points="1496,75 1506,75 1501,79" fill="#a8b4c8"/>
<polygon points="8,81 15.5,81 11.75,85.5" fill="#fff"/>
<text x="20" y="86" font-family="Liberation Sans" font-size="9.6" fill="#fff" textLength="186" lengthAdjust="spacingAndGlyphs">XAGUSD,M30  32.012 32.034 31.938 31.941</text>
<text x="9" y="99" font-family="Liberation Sans" font-size="9.6" fill="#fff" textLength="321" lengthAdjust="spacingAndGlyphs">MagicNumber = 0 РЕЖИМ_РАБОТЫ = 2текущее_значение_разбежки = 0</text>
<text x="9" y="111" font-family="Liberation Sans" font-size="9.6" fill="#fff" textLength="251" lengthAdjust="spacingAndGlyphs">Инструменты спреда, Символ: 0 &amp; XAGUSD &amp; XAUUSD&amp;</text>
<text x="9" y="123" font-family="Liberation Sans" font-size="9.6" fill="#fff" textLength="234" lengthAdjust="spacingAndGlyphs">ind_10 = -63.2763 ind_11 = -64.4774 ind_12 = -65.3236</text>
<text x="9" y="135" font-family="Liberation Sans" font-size="9.6" fill="#fff" textLength="229" lengthAdjust="spacingAndGlyphs">ind_20 = -9.4556 ind_21 = -10.1144 ind_22 = -10.6058</text>
<text x="9" y="147" font-family="Liberation Sans" font-size="9.6" fill="#fff" textLength="141" lengthAdjust="spacingAndGlyphs">ind_30 = 0 ind_31 = 0 ind_32 = 0</text>
<text x="9" y="159" font-family="Liberation Sans" font-size="9.6" fill="#fff" textLength="96" lengthAdjust="spacingAndGlyphs">BufS0 =  0 BufS1 =  0</text>
<text x="9" y="171" font-family="Liberation Sans" font-size="9.6" fill="#fff" textLength="164" lengthAdjust="spacingAndGlyphs">Суммарный профит закрытия = $500</text>
<text x="9" y="183" font-family="Liberation Sans" font-size="9.6" fill="#fff" textLength="171" lengthAdjust="spacingAndGlyphs">Суммарный убыток закрытия = $-5000</text>
<text x="9" y="195" font-family="Liberation Sans" font-size="9.6" fill="#fff" textLength="143" lengthAdjust="spacingAndGlyphs">Текущий суммарный профит = 0</text>
<text x="9" y="207" font-family="Liberation Sans" font-size="9.6" fill="#fff" textLength="95" lengthAdjust="spacingAndGlyphs">Трейлинг_Стоп = 100</text>
<text x="9" y="219" font-family="Liberation Sans" font-size="9.6" fill="#fff" textLength="95" lengthAdjust="spacingAndGlyphs">Уровень закрытия =0</text>
<text x="12" y="232" font-family="Liberation Sans" font-size="9.6" fill="#fff" textLength="91" lengthAdjust="spacingAndGlyphs">#703962206 sell 0.10</text>
<text x="15" y="144.5" font-family="Liberation Sans" font-size="9.6" fill="#fff" textLength="88" lengthAdjust="spacingAndGlyphs">#703919653 buy 0.20</text>
<text x="11" y="173" font-family="Liberation Sans" font-size="9.6" fill="#fff" textLength="89" lengthAdjust="spacingAndGlyphs">#703969786 sell 0.02</text>
<text x="1666" y="87" font-family="Liberation Sans" font-size="9.6" fill="#fff" textLength="196" lengthAdjust="spacingAndGlyphs">Exp_Arbitr_Trailing_3 пары № 18 актуальный</text>
<circle cx="1867" cy="83.5" r="5" fill="none" stroke="#fff" stroke-width="1"/><circle cx="1865.2" cy="82" r="0.8" fill="#fff"/><circle cx="1868.8" cy="82" r="0.8" fill="#fff"/><path d="M1864.5 85 Q1867 87.5 1869.5 85" fill="none" stroke="#fff" stroke-width="0.9"/></g>
<g clip-path="url(#c2)"><text x="10" y="358.5" font-family="Liberation Sans" font-size="11.5" fill="#8a8a8a" textLength="290" lengthAdjust="spacingAndGlyphs">1.00*BOOM(XAGUSD02*10)-XAUUSD(25,1.00)</text>
<text x="42" y="358.5" font-family="Liberation Sans" font-size="11.5" fill="#8a8a8a" fill-opacity="0.7" textLength="236" lengthAdjust="spacingAndGlyphs">COPPER(XAGUSD02*10)-XAUUSD(25,1.00)</text>
<polyline points="5.0,340.8 66.7,344.0 133.0,350.0 200.0,355.0 240.0,356.2 265.0,357.2 296.0,360.3 315.0,362.0 352.5,365.0 377.5,368.8 402.5,373.0 427.5,376.0 452.5,379.4 480.0,383.0 517.5,389.4 555.0,393.0 586.0,396.0 612.5,397.5 646.0,400.0 670.0,398.5 720.0,396.2 742.5,395.6 766.0,393.5 785.0,392.5 826.0,391.2 845.0,386.2 865.0,381.2 886.0,378.5 972.5,378.5 997.5,382.5 1022.5,385.6 1035.0,383.0 1055.0,380.2 1067.5,380.6 1085.0,383.8 1110.0,387.5 1141.0,395.0 1166.0,404.4 1200.0,415.6 1220.0,423.5 1235.0,426.2 1255.0,429.4 1285.0,433.0 1291.0,434.6 1306.0,433.5 1337.5,433.8 1350.0,433.5 1375.0,432.2 1392.5,431.5 1417.5,432.8 1433.0,439.4 1461.0,452.5 1480.0,456.0 1497.0,463.0" fill="none" stroke="#20c8d0" stroke-width="1"/>
<polyline points="5.0,344.8 66.7,348.0 133.0,354.0 200.0,359.0 240.0,360.2 265.0,361.2 296.0,364.3 315.0,366.0 352.5,369.0 377.5,372.8 402.5,377.0 427.5,380.0 452.5,383.4 480.0,387.0 517.5,393.4 555.0,397.0 586.0,400.0 612.5,401.5 646.0,404.0 670.0,402.5 720.0,400.2 742.5,399.6 766.0,397.5 785.0,396.5 826.0,395.2 845.0,390.2 865.0,385.2 886.0,382.5 972.5,382.5 997.5,386.5 1022.5,389.6 1035.0,387.0 1055.0,384.2 1067.5,384.6 1085.0,387.8 1110.0,391.5 1141.0,399.0 1166.0,408.4 1200.0,419.6 1220.0,427.5 1235.0,430.2 1255.0,433.4 1285.0,437.0 1291.0,438.6 1306.0,437.5 1337.5,437.8 1350.0,437.5 1375.0,436.2 1392.5,435.5 1417.5,436.9 1433.0,443.7 1461.0,457.0 1480.0,460.7 1497.0,467.8" fill="none" stroke="#20c8d0" stroke-width="1"/>
<polyline points="5.0,348.8 66.7,352.0 133.0,358.0 200.0,363.0 240.0,364.2 265.0,365.2 296.0,368.3 315.0,370.0 352.5,373.0 377.5,376.8 402.5,381.0 427.5,384.0 452.5,387.4 480.0,391.0 517.5,397.4 555.0,401.0 586.0,404.0 612.5,405.5 646.0,408.0 670.0,406.5 720.0,404.2 742.5,403.6 766.0,401.5 785.0,400.5 826.0,399.2 845.0,394.2 865.0,389.2 886.0,386.5 972.5,386.5 997.5,390.5 1022.5,393.6 1035.0,391.0 1055.0,388.2 1067.5,388.6 1085.0,391.8 1110.0,395.5 1141.0,403.0 1166.0,412.4 1200.0,423.6 1220.0,431.5 1235.0,434.2 1255.0,437.4 1285.0,441.0 1291.0,442.6 1306.0,441.5 1337.5,441.8 1350.0,441.5 1375.0,440.2 1392.5,439.5 1417.5,441.0 1433.0,447.9 1461.0,461.5 1480.0,465.3 1497.0,472.6" fill="none" stroke="#9acd32" stroke-width="1"/>
<polyline points="5.0,352.8 66.7,356.0 133.0,362.0 200.0,367.0 240.0,368.2 265.0,369.2 296.0,372.3 315.0,374.0 352.5,377.0 377.5,380.8 402.5,385.0 427.5,388.0 452.5,391.4 480.0,395.0 517.5,401.4 555.0,405.0 586.0,408.0 612.5,409.5 646.0,412.0 670.0,410.5 720.0,408.2 742.5,407.6 766.0,405.5 785.0,404.5 826.0,403.2 845.0,398.2 865.0,393.2 886.0,390.5 972.5,390.5 997.5,394.5 1022.5,397.6 1035.0,395.0 1055.0,392.2 1067.5,392.6 1085.0,395.8 1110.0,399.5 1141.0,407.0 1166.0,416.4 1200.0,427.6 1220.0,435.5 1235.0,438.2 1255.0,441.4 1285.0,445.0 1291.0,446.6 1306.0,445.5 1337.5,445.8 1350.0,445.5 1375.0,444.2 1392.5,443.5 1417.5,445.2 1433.0,452.2 1461.0,466.0 1480.0,470.0 1497.0,477.4" fill="none" stroke="#ff7f50" stroke-width="1"/>
<polyline points="5.0,356.8 66.7,360.0 133.0,366.0 200.0,371.0 240.0,372.2 265.0,373.2 296.0,376.3 315.0,378.0 352.5,381.0 377.5,384.8 402.5,389.0 427.5,392.0 452.5,395.4 480.0,399.0 517.5,405.4 555.0,409.0 586.0,412.0 612.5,413.5 646.0,416.0 670.0,414.5 720.0,412.2 742.5,411.6 766.0,409.5 785.0,408.5 826.0,407.2 845.0,402.2 865.0,397.2 886.0,394.5 972.5,394.5 997.5,398.5 1022.5,401.6 1035.0,399.0 1055.0,396.2 1067.5,396.6 1085.0,399.8 1110.0,403.5 1141.0,411.0 1166.0,420.4 1200.0,431.6 1220.0,439.5 1235.0,442.2 1255.0,445.4 1285.0,449.0 1291.0,450.6 1306.0,449.5 1337.5,449.8 1350.0,449.5 1375.0,448.2 1392.5,447.5 1417.5,449.3 1433.0,456.5 1461.0,470.5 1480.0,474.6 1497.0,482.2" fill="none" stroke="#ff7f50" stroke-width="1"/>
<polyline points="5.0,343.0 11.0,345.0 14.0,347.0 25.0,347.5 36.0,348.0 42.5,350.0 57.5,353.0 70.0,355.0 81.0,359.4 87.5,357.5 95.0,358.0 104.0,364.0 107.5,359.4 116.0,363.0 120.0,360.6 131.0,360.6 140.0,366.0 145.0,362.5 151.0,363.0 160.0,361.0 167.5,359.4 177.5,367.5 186.0,362.0 194.0,368.0 200.0,367.0 207.5,364.4 215.0,364.0 225.0,365.6 231.0,364.0 240.0,364.4 246.0,362.5 261.0,362.5 265.0,367.0 271.0,370.0 281.0,370.6 287.5,373.0 294.0,370.0 299.0,369.4 310.0,368.8 319.0,372.0 322.5,370.0 330.0,373.0 340.0,373.0 346.0,377.0 359.0,375.0 370.0,377.0 380.0,385.0 385.0,382.5 391.0,383.8 399.0,387.0 402.5,383.8 412.5,385.0 416.0,385.0 430.0,386.0 437.5,387.0 445.0,388.0 452.5,390.6 460.0,390.0 469.0,394.4 475.0,397.0 480.0,397.0 487.5,398.0 495.0,397.0 502.5,396.0 510.0,401.0 514.0,397.0 520.0,397.0 525.0,399.0 530.0,397.5 535.0,400.0 539.0,400.6 545.0,403.0 550.0,405.0 556.0,403.8 562.5,402.5 567.5,403.8 572.5,405.0 580.0,405.6 584.0,403.8 589.0,402.5 596.0,405.6 602.5,403.8 610.0,406.0 617.5,407.0 622.5,407.5 630.0,409.4 635.0,410.6 642.5,408.8 647.5,409.4 651.0,401.0 657.5,405.0 662.5,402.0 669.0,405.0 674.0,407.5 680.0,405.6 692.5,405.0 697.5,401.0 705.0,400.0 711.0,402.0 720.0,400.6 724.0,403.8 729.0,406.2 734.0,404.4 741.0,404.4 745.0,399.4 750.0,400.6 755.0,400.0 760.0,398.0 767.5,398.0 772.5,401.2 779.0,402.0 785.0,397.5 791.0,397.5 800.0,400.0 805.0,400.0 812.5,397.5 820.0,397.5 826.0,393.8 832.5,390.6 837.5,391.2 841.0,388.0 845.0,388.0 850.0,390.0 854.0,385.6 860.0,386.2 865.0,383.8 870.0,386.2 876.0,383.0 882.5,386.2 890.0,385.0 896.0,388.8 901.0,386.2 906.0,390.0 911.0,383.8 917.5,386.9 925.0,386.2 932.5,383.8 940.0,383.8 947.5,388.0 955.0,388.0 960.0,387.5 966.0,388.0 970.0,389.4 974.0,388.8 977.5,392.0 981.0,393.0 987.5,393.0 990.6,388.8 996.0,393.8 1002.5,394.4 1005.0,396.2 1007.5,393.8 1010.0,394.4 1014.0,393.0 1019.0,393.0 1022.5,392.5 1027.5,386.2 1032.5,385.6 1047.5,385.6 1053.0,383.8 1056.0,386.2 1060.0,388.8 1065.0,398.0 1070.0,400.0 1075.0,398.8 1079.4,400.6 1082.5,399.4 1086.0,400.6 1090.0,394.4 1092.5,393.0 1095.0,395.0 1100.0,393.8 1102.5,396.2 1107.5,393.0 1114.0,400.0 1116.0,404.4 1122.5,411.9 1127.5,409.4 1132.5,410.0 1139.0,409.4 1142.5,411.2 1147.5,410.6 1152.5,413.8 1160.0,418.8 1167.5,419.4 1172.5,422.5 1180.0,426.2 1189.0,428.8 1200.0,437.5 1207.5,437.8 1211.0,435.6 1219.0,434.0 1231.0,434.0 1235.0,436.2 1241.0,434.0 1246.0,441.2 1252.5,443.8 1261.0,443.8 1265.0,441.2 1270.0,440.6 1276.0,438.8 1281.0,441.9 1287.5,444.0 1292.5,441.9 1296.0,445.0 1301.0,441.9 1305.0,440.0 1309.0,438.5 1314.0,442.5 1320.0,441.9 1327.5,438.0 1337.5,448.0 1345.0,443.8 1351.0,437.2 1361.0,441.9 1367.5,440.6 1375.0,435.0 1381.0,443.0 1387.5,441.9 1391.0,437.2 1396.0,441.9 1405.0,441.9 1415.0,440.0 1416.0,450.0 1419.0,460.0 1425.0,463.0 1430.0,457.5 1440.6,468.4 1448.0,460.0 1457.5,464.7 1463.0,476.0 1468.8,462.0 1478.0,463.8 1480.0,485.3 1487.5,486.2 1493.0,482.5 1497.0,485.3" fill="none" stroke="#00e0e8" stroke-width="2" stroke-linejoin="round"/>
<text x="9" y="343" font-family="Liberation Sans" font-size="9.6" fill="#fff" textLength="344" lengthAdjust="spacingAndGlyphs">Spread-I env_MQL -150993.0 -150344.2 -149599.9 -148855.6 -148111.3 -147367.0</text></g>
<g clip-path="url(#c3)"><line x1="5" y1="513.5" x2="1877" y2="513.5" stroke="#32cd32" stroke-dasharray="4 3" shape-rendering="crispEdges"/>
<line x1="71.5" y1="498" x2="71.5" y2="654" stroke="#00008b" shape-rendering="crispEdges"/>
<line x1="107.5" y1="498" x2="107.5" y2="654" stroke="#00008b" shape-rendering="crispEdges"/>
<line x1="203.5" y1="498" x2="203.5" y2="654" stroke="#00008b" shape-rendering="crispEdges"/>
<line x1="235.5" y1="498" x2="235.5" y2="654" stroke="#00008b" shape-rendering="crispEdges"/>
<line x1="1329.5" y1="498" x2="1329.5" y2="654" stroke="#00008b" shape-rendering="crispEdges"/>
<line x1="1371.5" y1="498" x2="1371.5" y2="654" stroke="#00008b" shape-rendering="crispEdges"/>
<line x1="1431.5" y1="498" x2="1431.5" y2="654" stroke="#00008b" shape-rendering="crispEdges"/>
<line x1="1441.5" y1="498" x2="1441.5" y2="654" stroke="#00008b" shape-rendering="crispEdges"/>
<line x1="1453.5" y1="498" x2="1453.5" y2="654" stroke="#00008b" shape-rendering="crispEdges"/>
<line x1="1463.5" y1="498" x2="1463.5" y2="654" stroke="#00008b" shape-rendering="crispEdges"/>
<line x1="1471.5" y1="498" x2="1471.5" y2="654" stroke="#00008b" shape-rendering="crispEdges"/>
<line x1="1473.5" y1="498" x2="1473.5" y2="654" stroke="#00008b" shape-rendering="crispEdges"/>
<line x1="113.5" y1="498" x2="113.5" y2="654" stroke="#a00000" shape-rendering="crispEdges"/>
<line x1="141.5" y1="498" x2="141.5" y2="654" stroke="#a00000" shape-rendering="crispEdges"/>
<polyline points="5.0,641.0 71.0,641.0 75.0,646.0 79.0,643.0 87.5,636.0 92.0,637.0 95.0,643.0 100.0,636.0 105.0,613.0 112.5,614.0 115.6,621.0 120.0,614.0 125.0,613.0 129.0,610.0 134.0,610.0 138.5,618.8 141.7,619.0 203.0,619.0 208.0,615.6 212.5,618.8 216.7,619.6 223.0,615.0 227.0,616.0 229.0,617.0 233.0,612.0 235.4,612.0 1327.0,612.0 1330.0,615.0 1334.0,615.0 1338.0,608.5 1343.0,606.4 1346.0,605.6 1352.0,608.0 1355.0,604.5 1361.0,613.0 1365.0,603.0 1371.4,594.7 1430.0,594.7 1432.0,596.6 1435.0,584.0 1440.5,574.0 1443.0,571.0 1445.0,551.0 1447.6,560.0 1452.0,556.0 1455.5,559.0 1460.0,552.0 1462.0,527.0 1465.0,506.0 1467.5,507.0 1470.6,513.0 1497.6,513.0" fill="none" stroke="#32cd32" stroke-width="2" stroke-linejoin="round"/>
<text x="9" y="510" font-family="Liberation Sans" font-size="9.6" fill="#fff" textLength="123" lengthAdjust="spacingAndGlyphs">Equity_virtual Total 10896.50</text>
<text x="1700" y="511.2" font-family="Liberation Sans" font-size="9.5" fill="#8090a8" textLength="174" lengthAdjust="spacingAndGlyphs">History: 1642 bars from 2025.02.13 02:30</text>
<text x="1781" y="521.2" font-family="Liberation Sans" font-size="9.5" fill="#8090a8" textLength="93" lengthAdjust="spacingAndGlyphs">Recovery Factor: 0.76</text>
<text x="1742" y="531.0" font-family="Liberation Sans" font-size="9.5" fill="#8090a8" textLength="132" lengthAdjust="spacingAndGlyphs">Absolute Drawdown: 1078.50 $</text>
<text x="1700" y="541.0" font-family="Liberation Sans" font-size="9.5" fill="#8090a8" textLength="174" lengthAdjust="spacingAndGlyphs">Maximal Drawdown: 1182.50 $ (11.70%)</text>
<text x="1700" y="550.9" font-family="Liberation Sans" font-size="9.5" fill="#8090a8" textLength="174" lengthAdjust="spacingAndGlyphs">Relative Drawdown: 11.70% (1182.50 $)</text>
<text x="1778" y="571.2" font-family="Liberation Sans" font-size="9.5" fill="#8090a8" textLength="96" lengthAdjust="spacingAndGlyphs">Gross Profit: 2231.50 $</text>
<text x="1783" y="581.0" font-family="Liberation Sans" font-size="9.5" fill="#8090a8" textLength="91" lengthAdjust="spacingAndGlyphs">Gross Loss: 1335.00 $</text>
<text x="1768" y="591.0" font-family="Liberation Sans" font-size="9.5" fill="#8090a8" textLength="106" lengthAdjust="spacingAndGlyphs">Total Net Profit: 896.50 $</text>
<text x="1800" y="601.2" font-family="Liberation Sans" font-size="9.5" fill="#8090a8" textLength="74" lengthAdjust="spacingAndGlyphs">Profit Factor: 1.67</text>
<text x="1778" y="611.2" font-family="Liberation Sans" font-size="9.5" fill="#8090a8" textLength="96" lengthAdjust="spacingAndGlyphs">Expected Payoff: 42.69</text>
<text x="1807" y="621.2" font-family="Liberation Sans" font-size="9.5" fill="#8090a8" textLength="67" lengthAdjust="spacingAndGlyphs">Total Trades: 21</text>
<text x="1720" y="631.0" font-family="Liberation Sans" font-size="9.5" fill="#8090a8" textLength="154" lengthAdjust="spacingAndGlyphs">Short Positions (won %): 8 (62.50%)</text>
<text x="1718" y="641.0" font-family="Liberation Sans" font-size="9.5" fill="#8090a8" textLength="156" lengthAdjust="spacingAndGlyphs">Long Positions (won %): 13 (61.54%)</text>
<text x="1713" y="650.9" font-family="Liberation Sans" font-size="9.5" fill="#8090a8" textLength="161" lengthAdjust="spacingAndGlyphs">Profit Trades (% of total): 13 (61.90%)</text></g>
<g><line x1="5" y1="717.5" x2="10" y2="718.75" stroke="#ff0000" stroke-width="1"/>
<line x1="10" y1="718.75" x2="20" y2="727.5" stroke="#ff0000" stroke-width="1"/>
<line x1="20" y1="727.5" x2="23.75" y2="729.4" stroke="#00e8f0" stroke-width="1"/>
<line x1="23.75" y1="729.4" x2="27.5" y2="729.4" stroke="#ff0000" stroke-width="1"/>
<line x1="27.5" y1="729.4" x2="37.5" y2="732.5" stroke="#ff0000" stroke-width="1"/>
<line x1="37.5" y1="732.5" x2="46" y2="738" stroke="#ff0000" stroke-width="1"/>
<line x1="46" y1="738" x2="55" y2="747" stroke="#ff0000" stroke-width="1"/>
<line x1="55" y1="747" x2="64" y2="763.75" stroke="#ff0000" stroke-width="1"/>
<line x1="64" y1="763.75" x2="70" y2="771" stroke="#00e8f0" stroke-width="1"/>
<line x1="70" y1="771" x2="82.5" y2="782" stroke="#00e8f0" stroke-width="1"/>
<line x1="82.5" y1="782" x2="90" y2="778" stroke="#ff0000" stroke-width="1"/>
<line x1="90" y1="778" x2="95" y2="780" stroke="#00e8f0" stroke-width="1"/>
<line x1="95" y1="780" x2="100" y2="778.75" stroke="#ff0000" stroke-width="1"/>
<line x1="100" y1="778.75" x2="105" y2="774.4" stroke="#ff0000" stroke-width="1"/>
<line x1="105" y1="774.4" x2="107.5" y2="764.4" stroke="#ff0000" stroke-width="1"/>
<line x1="107.5" y1="764.4" x2="112.5" y2="752.5" stroke="#00e8f0" stroke-width="1"/>
<line x1="112.5" y1="752.5" x2="118.75" y2="750.6" stroke="#00e8f0" stroke-width="1"/>
<line x1="118.75" y1="750.6" x2="128.75" y2="741.9" stroke="#00e8f0" stroke-width="1"/>
<line x1="128.75" y1="741.9" x2="134.4" y2="740.6" stroke="#00e8f0" stroke-width="1"/>
<line x1="134.4" y1="740.6" x2="140" y2="747.5" stroke="#ff0000" stroke-width="1"/>
<line x1="140" y1="747.5" x2="143.75" y2="748" stroke="#00e8f0" stroke-width="1"/>
<line x1="143.75" y1="748" x2="151" y2="748.75" stroke="#ff0000" stroke-width="1"/>
<line x1="151" y1="748.75" x2="155" y2="748" stroke="#00e8f0" stroke-width="1"/>
<line x1="155" y1="748" x2="162.5" y2="747" stroke="#00e8f0" stroke-width="1"/>
<line x1="162.5" y1="747" x2="167.5" y2="742.5" stroke="#00e8f0" stroke-width="1"/>
<line x1="167.5" y1="742.5" x2="172" y2="742.5" stroke="#ff0000" stroke-width="1"/>
<line x1="172" y1="742.5" x2="178.75" y2="749.4" stroke="#ff0000" stroke-width="1"/>
<line x1="178.75" y1="749.4" x2="183" y2="753" stroke="#ff0000" stroke-width="1"/>
<line x1="183" y1="753" x2="187.5" y2="750" stroke="#00e8f0" stroke-width="1"/>
<line x1="187.5" y1="750" x2="190" y2="750.6" stroke="#ff0000" stroke-width="1"/>
<line x1="190" y1="750.6" x2="195" y2="763.75" stroke="#ff0000" stroke-width="1"/>
<line x1="195" y1="763.75" x2="197.5" y2="768" stroke="#00e8f0" stroke-width="1"/>
<line x1="197.5" y1="768" x2="202.5" y2="774.4" stroke="#00e8f0" stroke-width="1"/>
<line x1="202.5" y1="774.4" x2="215" y2="768" stroke="#ff0000" stroke-width="1"/>
<line x1="215" y1="768" x2="221" y2="767.5" stroke="#ff0000" stroke-width="1"/>
<line x1="221" y1="767.5" x2="228.75" y2="767.5" stroke="#00e8f0" stroke-width="1"/>
<line x1="228.75" y1="767.5" x2="240" y2="762.5" stroke="#ff0000" stroke-width="1"/>
<line x1="240" y1="762.5" x2="243.75" y2="762.25" stroke="#00e8f0" stroke-width="1"/>
<line x1="243.75" y1="762.25" x2="249.4" y2="765" stroke="#ff0000" stroke-width="1"/>
<line x1="249.4" y1="765" x2="256.25" y2="763.5" stroke="#ff0000" stroke-width="1"/>
<line x1="256.25" y1="763.5" x2="261.25" y2="764" stroke="#00e8f0" stroke-width="1"/>
<line x1="261.25" y1="764" x2="271.25" y2="770" stroke="#00e8f0" stroke-width="1"/>
<line x1="271.25" y1="770" x2="277.5" y2="775.6" stroke="#00e8f0" stroke-width="1"/>
<line x1="277.5" y1="775.6" x2="282.5" y2="784.4" stroke="#00e8f0" stroke-width="1"/>
<line x1="282.5" y1="784.4" x2="292.5" y2="787.5" stroke="#00e8f0" stroke-width="1"/>
<line x1="292.5" y1="787.5" x2="300" y2="781.25" stroke="#ff0000" stroke-width="1"/>
<line x1="300" y1="781.25" x2="305" y2="777" stroke="#ff0000" stroke-width="1"/>
<line x1="305" y1="777" x2="311.25" y2="771" stroke="#ff0000" stroke-width="1"/>
<line x1="311.25" y1="771" x2="315" y2="769.4" stroke="#00e8f0" stroke-width="1"/>
<line x1="315" y1="769.4" x2="320" y2="771.5" stroke="#ff0000" stroke-width="1"/>
<line x1="320" y1="771.5" x2="323.75" y2="769.75" stroke="#00e8f0" stroke-width="1"/>
<line x1="323.75" y1="769.75" x2="330" y2="769.75" stroke="#00e8f0" stroke-width="1"/>
<line x1="330" y1="769.75" x2="333.75" y2="772.5" stroke="#00e8f0" stroke-width="1"/>
<line x1="333.75" y1="772.5" x2="342.5" y2="772.75" stroke="#ff0000" stroke-width="1"/>
<line x1="342.5" y1="772.75" x2="348.75" y2="774.4" stroke="#00e8f0" stroke-width="1"/>
<line x1="348.75" y1="774.4" x2="352.5" y2="774.4" stroke="#ff0000" stroke-width="1"/>
<line x1="352.5" y1="774.4" x2="360" y2="768" stroke="#ff0000" stroke-width="1"/>
<line x1="360" y1="768" x2="365" y2="767.25" stroke="#00e8f0" stroke-width="1"/>
<line x1="365" y1="767.25" x2="371.25" y2="765.6" stroke="#ff0000" stroke-width="1"/>
<line x1="371.25" y1="765.6" x2="375.6" y2="767.25" stroke="#00e8f0" stroke-width="1"/>
<line x1="375.6" y1="767.25" x2="382.5" y2="778.75" stroke="#00e8f0" stroke-width="1"/>
<line x1="382.5" y1="778.75" x2="387.5" y2="779.75" stroke="#ff0000" stroke-width="1"/>
<line x1="387.5" y1="779.75" x2="396.25" y2="781.9" stroke="#00e8f0" stroke-width="1"/>
<line x1="396.25" y1="781.9" x2="402.5" y2="785.6" stroke="#00e8f0" stroke-width="1"/>
<line x1="402.5" y1="785.6" x2="412.5" y2="786.9" stroke="#00e8f0" stroke-width="1"/>
<line x1="412.5" y1="786.9" x2="420" y2="786.5" stroke="#ff0000" stroke-width="1"/>
<line x1="420" y1="786.5" x2="427.5" y2="782.5" stroke="#ff0000" stroke-width="1"/>
<line x1="427.5" y1="782.5" x2="437.5" y2="781.25" stroke="#00e8f0" stroke-width="1"/>
<line x1="437.5" y1="781.25" x2="442.5" y2="783.75" stroke="#00e8f0" stroke-width="1"/>
<line x1="442.5" y1="783.75" x2="452.5" y2="798.75" stroke="#00e8f0" stroke-width="1"/>
<line x1="452.5" y1="798.75" x2="460" y2="797.5" stroke="#ff0000" stroke-width="1"/>
<line x1="460" y1="797.5" x2="470" y2="805" stroke="#00e8f0" stroke-width="1"/>
<line x1="470" y1="805" x2="480" y2="816.25" stroke="#00e8f0" stroke-width="1"/>
<line x1="480" y1="816.25" x2="485" y2="817.5" stroke="#00e8f0" stroke-width="1"/>
<line x1="485" y1="817.5" x2="505" y2="795" stroke="#ff0000" stroke-width="1"/>
<line x1="505" y1="795" x2="522.5" y2="785" stroke="#ff0000" stroke-width="1"/>
<line x1="522.5" y1="785" x2="532.5" y2="782.5" stroke="#ff0000" stroke-width="1"/>
<line x1="532.5" y1="782.5" x2="542.5" y2="795" stroke="#00e8f0" stroke-width="1"/>
<line x1="542.5" y1="795" x2="552.5" y2="810" stroke="#00e8f0" stroke-width="1"/>
<line x1="552.5" y1="810" x2="560" y2="812.5" stroke="#00e8f0" stroke-width="1"/>
<line x1="560" y1="812.5" x2="570" y2="806" stroke="#ff0000" stroke-width="1"/>
<line x1="570" y1="806" x2="590" y2="788.75" stroke="#ff0000" stroke-width="1"/>
<line x1="590" y1="788.75" x2="602.5" y2="787.5" stroke="#ff0000" stroke-width="1"/>
<line x1="602.5" y1="787.5" x2="615" y2="799" stroke="#00e8f0" stroke-width="1"/>
<line x1="615" y1="799" x2="635" y2="811" stroke="#00e8f0" stroke-width="1"/>
<line x1="635" y1="811" x2="657.5" y2="792.5" stroke="#ff0000" stroke-width="1"/>
<line x1="657.5" y1="792.5" x2="667.5" y2="784.5" stroke="#ff0000" stroke-width="1"/>
<line x1="667.5" y1="784.5" x2="675" y2="786" stroke="#00e8f0" stroke-width="1"/>
<line x1="675" y1="786" x2="685" y2="781" stroke="#ff0000" stroke-width="1"/>
<line x1="685" y1="781" x2="695" y2="777.5" stroke="#ff0000" stroke-width="1"/>
<line x1="695" y1="777.5" x2="705" y2="762.5" stroke="#ff0000" stroke-width="1"/>
<line x1="705" y1="762.5" x2="712.5" y2="755" stroke="#00e8f0" stroke-width="1"/>
<line x1="712.5" y1="755" x2="722.5" y2="752.5" stroke="#00e8f0" stroke-width="1"/>
<line x1="722.5" y1="752.5" x2="735" y2="757.5" stroke="#ff0000" stroke-width="1"/>
<line x1="735" y1="757.5" x2="750" y2="757.5" stroke="#ff0000" stroke-width="1"/>
<line x1="750" y1="757.5" x2="772.5" y2="760" stroke="#ff0000" stroke-width="1"/>
<line x1="772.5" y1="760" x2="782.5" y2="765" stroke="#ff0000" stroke-width="1"/>
<line x1="782.5" y1="765" x2="797.5" y2="756" stroke="#00e8f0" stroke-width="1"/>
<line x1="797.5" y1="756" x2="812.5" y2="752.5" stroke="#00e8f0" stroke-width="1"/>
<line x1="812.5" y1="752.5" x2="830" y2="730" stroke="#00e8f0" stroke-width="1"/>
<line x1="830" y1="730" x2="845" y2="706" stroke="#00e8f0" stroke-width="1"/>
<line x1="845" y1="706" x2="857.5" y2="702.5" stroke="#00e8f0" stroke-width="1"/>
<line x1="857.5" y1="702.5" x2="870" y2="704" stroke="#ff0000" stroke-width="1"/>
<line x1="870" y1="704" x2="890" y2="717.5" stroke="#ff0000" stroke-width="1"/>
<line x1="890" y1="717.5" x2="907.5" y2="737.5" stroke="#ff0000" stroke-width="1"/>
<line x1="907.5" y1="737.5" x2="922.5" y2="736" stroke="#00e8f0" stroke-width="1"/>
<line x1="922.5" y1="736" x2="930" y2="738.75" stroke="#ff0000" stroke-width="1"/>
<line x1="930" y1="738.75" x2="952.5" y2="756" stroke="#ff0000" stroke-width="1"/>
<line x1="952.5" y1="756" x2="967.5" y2="758.75" stroke="#ff0000" stroke-width="1"/>
<line x1="967.5" y1="758.75" x2="987.5" y2="771" stroke="#00e8f0" stroke-width="1"/>
<line x1="987.5" y1="771" x2="1002.5" y2="772.5" stroke="#00e8f0" stroke-width="1"/>
<line x1="1002.5" y1="772.5" x2="1015" y2="758.75" stroke="#ff0000" stroke-width="1"/>
<line x1="1015" y1="758.75" x2="1025" y2="747.5" stroke="#00e8f0" stroke-width="1"/>
<line x1="1025" y1="747.5" x2="1035" y2="725" stroke="#00e8f0" stroke-width="1"/>
<line x1="1035" y1="725" x2="1050" y2="715" stroke="#00e8f0" stroke-width="1"/>
<line x1="1050" y1="715" x2="1055" y2="714.5" stroke="#00e8f0" stroke-width="1"/>
<line x1="1055" y1="714.5" x2="1065" y2="725" stroke="#ff0000" stroke-width="1"/>
<line x1="1065" y1="725" x2="1072.5" y2="752.5" stroke="#ff0000" stroke-width="1"/>
<line x1="1072.5" y1="752.5" x2="1085" y2="767.5" stroke="#ff0000" stroke-width="1"/>
<line x1="1085" y1="767.5" x2="1095" y2="762.5" stroke="#00e8f0" stroke-width="1"/>
<line x1="1095" y1="762.5" x2="1107.5" y2="756" stroke="#00e8f0" stroke-width="1"/>
<line x1="1107.5" y1="756" x2="1115" y2="762.5" stroke="#ff0000" stroke-width="1"/>
<line x1="1115" y1="762.5" x2="1127.5" y2="805" stroke="#00e8f0" stroke-width="1"/>
<line x1="1127.5" y1="805" x2="1140" y2="813.75" stroke="#00e8f0" stroke-width="1"/>
<line x1="1140" y1="813.75" x2="1150" y2="807.5" stroke="#ff0000" stroke-width="1"/>
<line x1="1150" y1="807.5" x2="1162.5" y2="812.5" stroke="#00e8f0" stroke-width="1"/>
<line x1="1162.5" y1="812.5" x2="1175" y2="807.5" stroke="#ff0000" stroke-width="1"/>
<line x1="1175" y1="807.5" x2="1182.5" y2="811" stroke="#00e8f0" stroke-width="1"/>
<line x1="1182.5" y1="811" x2="1195" y2="826" stroke="#00e8f0" stroke-width="1"/>
<line x1="1195" y1="826" x2="1200" y2="827.5" stroke="#00e8f0" stroke-width="1"/>
<line x1="1200" y1="827.5" x2="1208.75" y2="847.5" stroke="#00e8f0" stroke-width="1"/>
<line x1="1208.75" y1="847.5" x2="1212.5" y2="849" stroke="#00e8f0" stroke-width="1"/>
<line x1="1212.5" y1="849" x2="1230" y2="822.5" stroke="#ff0000" stroke-width="1"/>
<line x1="1230" y1="822.5" x2="1242.5" y2="810" stroke="#ff0000" stroke-width="1"/>
<line x1="1242.5" y1="810" x2="1255" y2="811" stroke="#00e8f0" stroke-width="1"/>
<line x1="1255" y1="811" x2="1277.5" y2="801" stroke="#ff0000" stroke-width="1"/>
<line x1="1277.5" y1="801" x2="1295" y2="801" stroke="#00e8f0" stroke-width="1"/>
<line x1="1295" y1="801" x2="1315" y2="805" stroke="#00e8f0" stroke-width="1"/>
<line x1="1315" y1="805" x2="1330" y2="794" stroke="#ff0000" stroke-width="1"/>
<line x1="1330" y1="794" x2="1350" y2="780" stroke="#ff0000" stroke-width="1"/>
<line x1="1350" y1="780" x2="1365" y2="767.5" stroke="#ff0000" stroke-width="1"/>
<line x1="1365" y1="767.5" x2="1375" y2="755" stroke="#ff0000" stroke-width="1"/>
<line x1="1375" y1="755" x2="1380" y2="755" stroke="#ff0000" stroke-width="1"/>
<line x1="1380" y1="755" x2="1400" y2="761" stroke="#00e8f0" stroke-width="1"/>
<line x1="1400" y1="761" x2="1410.8" y2="767.7" stroke="#ff0000" stroke-width="1"/>
<line x1="1410.8" y1="767.7" x2="1417" y2="783" stroke="#00e8f0" stroke-width="1"/>
<line x1="1417" y1="783" x2="1427.7" y2="810.8" stroke="#00e8f0" stroke-width="1"/>
<line x1="1427.7" y1="810.8" x2="1434" y2="812.3" stroke="#00e8f0" stroke-width="1"/>
<line x1="1434" y1="812.3" x2="1444.6" y2="840" stroke="#00e8f0" stroke-width="1"/>
<line x1="1444.6" y1="840" x2="1450.8" y2="843" stroke="#00e8f0" stroke-width="1"/>
<line x1="1450.8" y1="843" x2="1458.5" y2="844.6" stroke="#00e8f0" stroke-width="1"/>
<line x1="1458.5" y1="844.6" x2="1469" y2="874" stroke="#00e8f0" stroke-width="1"/>
<line x1="1469" y1="874" x2="1472" y2="875.4" stroke="#00e8f0" stroke-width="1"/>
<line x1="1472" y1="875.4" x2="1491" y2="926" stroke="#00e8f0" stroke-width="1"/>
<line x1="1491" y1="926" x2="1495" y2="924.6" stroke="#ff0000" stroke-width="1"/>
<path d="M5.7 758.5C6.3 758.5 10.7 759.4 12.0 758.0C13.3 756.6 17.4 747.4 19.0 745.0C20.6 742.6 26.6 735.2 28.5 734.0C30.4 732.8 35.3 733.3 38.0 733.0C40.7 732.7 53.1 731.4 55.5 731.0C57.9 730.6 60.0 727.8 62.0 728.7C64.0 729.6 73.5 738.9 76.0 739.8C78.5 740.7 84.8 737.9 87.0 738.0C89.2 738.1 95.9 742.4 98.0 740.4C100.1 738.4 106.1 721.6 108.0 718.0C109.9 714.4 115.2 706.4 117.4 704.0C119.6 701.6 127.8 695.0 130.0 694.4C132.2 693.8 137.4 696.5 139.6 697.6C141.8 698.7 149.6 703.3 152.3 705.5C155.0 707.7 164.5 718.4 166.6 719.8C168.7 721.2 171.8 720.1 173.0 719.8C174.2 719.5 177.3 716.7 179.0 717.0C180.7 717.3 187.8 720.7 190.0 723.0C192.2 725.3 199.4 738.2 201.5 740.4C203.6 742.6 209.2 743.9 211.0 745.0C212.8 746.1 216.6 750.5 219.0 751.0C221.4 751.5 232.5 749.9 234.8 750.0C237.2 750.1 241.0 751.1 242.5 751.9C244.0 752.6 248.8 757.0 250.0 757.5C251.2 758.0 253.5 756.5 255.0 756.5C256.5 756.5 263.1 758.5 265.0 757.8C266.9 757.0 272.5 749.6 273.8 748.8C275.0 747.9 276.6 748.4 277.5 748.8C278.4 749.1 281.6 752.4 282.5 752.8C283.4 753.1 285.5 752.8 286.2 752.5C287.0 752.2 288.8 750.4 290.0 750.0C291.2 749.6 296.6 749.4 298.8 749.0C300.9 748.6 308.6 746.3 311.2 746.0C313.9 745.7 323.1 745.9 325.0 745.6C326.9 745.3 328.6 744.0 330.0 743.1C331.4 742.2 337.1 737.6 338.8 736.9C340.4 736.2 344.6 736.8 346.2 736.0C347.9 735.2 353.2 729.8 355.0 728.7C356.8 727.6 362.7 726.2 364.6 725.3C366.5 724.3 372.5 719.6 374.0 719.2C375.5 718.8 378.6 720.9 380.0 721.0C381.4 721.1 386.8 719.9 388.0 720.0C389.2 720.1 390.7 721.4 392.0 721.8C393.3 722.1 398.2 721.9 401.0 723.5C403.8 725.1 416.9 736.7 420.0 738.2C423.1 739.8 430.1 739.2 432.0 739.0C433.9 738.8 437.8 736.6 439.0 736.5C440.2 736.4 442.6 737.0 444.0 738.2C445.4 739.4 450.9 747.6 452.8 748.6C454.7 749.6 460.9 747.1 463.0 747.8C465.1 748.4 471.9 754.7 473.6 755.5C475.3 756.3 478.9 755.6 480.0 755.6C481.1 755.6 483.2 757.3 485.0 756.0C486.8 754.7 495.0 744.7 497.5 742.5C500.0 740.3 507.2 734.2 510.0 733.8C512.8 733.2 522.0 735.9 525.0 737.5C528.0 739.1 537.5 747.2 540.0 750.0C542.5 752.8 548.0 763.0 550.0 765.0C552.0 767.0 557.5 769.8 560.0 770.0C562.5 770.2 572.2 768.5 575.0 767.5C577.8 766.5 585.2 761.0 587.5 760.0C589.8 759.0 595.8 757.0 597.5 757.0C599.2 757.0 602.8 758.1 605.0 760.0C607.2 761.9 617.0 774.2 620.0 776.0C623.0 777.8 632.1 777.9 635.0 777.5C637.9 777.1 647.0 771.8 648.8 772.5C650.5 773.2 651.1 782.9 652.5 785.0C653.9 787.1 660.5 793.0 662.5 793.8C664.5 794.5 670.2 793.6 672.5 792.5C674.8 791.4 682.8 784.1 685.0 782.5C687.2 780.9 692.5 776.6 695.0 776.0C697.5 775.4 707.0 776.9 710.0 776.0C713.0 775.1 722.5 769.0 725.0 767.5C727.5 766.0 733.2 761.6 735.0 761.0C736.8 760.4 740.2 759.6 742.5 761.0C744.8 762.4 755.0 772.4 757.5 775.0C760.0 777.6 764.8 786.4 767.5 787.0C770.2 787.6 781.8 782.2 785.0 781.0C788.2 779.8 797.0 776.6 800.0 775.0C803.0 773.4 812.0 766.9 815.0 765.0C818.0 763.1 827.5 757.4 830.0 756.0C832.5 754.6 837.0 750.7 840.0 751.0C843.0 751.3 856.5 757.9 860.0 758.8C863.5 759.6 872.5 760.0 875.0 760.0C877.5 760.0 883.0 758.4 885.0 758.8C887.0 759.1 892.8 764.1 895.0 763.8C897.2 763.4 905.5 755.5 907.5 755.0C909.5 754.5 913.2 758.8 915.0 758.8C916.8 758.8 923.5 754.8 925.0 755.0C926.5 755.2 927.2 759.7 930.0 761.0C932.8 762.3 949.0 767.5 952.5 768.0C956.0 768.5 961.8 768.0 965.0 766.0C968.2 764.0 981.8 749.5 985.0 747.5C988.2 745.5 995.5 746.5 997.5 746.0C999.5 745.5 1003.2 744.5 1005.0 742.5C1006.8 740.5 1013.4 727.2 1015.0 726.0C1016.6 724.8 1019.5 730.0 1021.0 730.0C1022.5 730.0 1028.6 725.8 1030.0 725.5C1031.4 725.2 1033.0 727.4 1035.0 727.5C1037.0 727.6 1047.5 726.8 1050.0 727.0C1052.5 727.2 1058.0 730.5 1060.0 729.5C1062.0 728.5 1067.5 719.4 1070.0 717.5C1072.5 715.6 1082.0 710.3 1085.0 711.0C1088.0 711.7 1097.0 722.7 1100.0 724.5C1103.0 726.3 1112.5 728.2 1115.0 728.8C1117.5 729.3 1123.0 729.4 1125.0 730.0C1127.0 730.6 1133.0 734.4 1135.0 734.5C1137.0 734.6 1143.0 731.1 1145.0 731.0C1147.0 730.9 1152.5 735.5 1155.0 733.8C1157.5 732.0 1167.1 717.3 1170.0 713.8C1172.9 710.2 1181.2 698.8 1183.8 698.0C1186.2 697.2 1192.9 704.2 1195.0 706.0C1197.1 707.8 1202.5 714.0 1205.0 716.0C1207.5 718.0 1217.5 724.9 1220.0 726.0C1222.5 727.1 1227.8 727.0 1230.0 727.5C1232.2 728.0 1239.5 732.3 1242.5 731.0C1245.5 729.7 1256.2 714.1 1260.0 714.5C1263.8 714.9 1276.0 731.6 1280.0 735.0C1284.0 738.4 1297.0 745.0 1300.0 748.8C1303.0 752.5 1308.0 770.0 1310.0 772.5C1312.0 775.0 1318.0 773.5 1320.0 774.0C1322.0 774.5 1327.5 778.9 1330.0 777.5C1332.5 776.1 1342.8 761.5 1345.0 760.0C1347.2 758.5 1351.0 761.8 1352.5 762.5C1354.0 763.2 1358.0 768.1 1360.0 767.5C1362.0 766.9 1370.5 756.6 1372.5 756.0C1374.5 755.4 1377.4 760.8 1380.0 761.0C1382.6 761.2 1395.7 758.0 1398.5 758.0C1401.3 758.0 1406.0 761.0 1407.7 761.0C1409.4 761.0 1413.5 760.6 1415.0 758.5C1416.5 756.4 1421.3 742.8 1423.0 740.0C1424.7 737.2 1430.2 731.9 1432.0 731.0C1433.8 730.1 1439.3 728.9 1441.5 731.0C1443.7 733.1 1451.8 748.6 1454.0 752.0C1456.2 755.4 1460.5 758.0 1463.0 764.6C1465.5 771.2 1476.0 815.0 1478.5 818.5C1481.0 822.0 1485.9 802.5 1487.7 800.0C1489.5 797.5 1496.1 793.7 1497.0 793.0" fill="none" stroke="#1e90ff" stroke-width="2.2" stroke-linejoin="round"/>
<path d="M5.7 713.5C6.4 713.5 10.4 715.4 12.7 714.0C15.0 712.6 26.0 700.9 28.5 700.0C31.0 699.1 36.1 704.6 38.0 705.5C39.9 706.4 45.9 707.8 47.6 708.7C49.4 709.7 53.9 713.3 55.5 715.0C57.1 716.7 61.8 723.0 63.5 726.0C65.2 729.0 71.2 742.0 73.0 745.0C74.8 748.0 79.1 755.2 81.0 756.0C82.9 756.8 90.1 753.0 92.0 753.0C93.9 753.0 98.7 757.0 100.0 755.6C101.3 754.2 103.4 744.6 104.7 738.8C106.0 733.0 111.0 703.2 112.6 697.6C114.2 692.0 118.9 685.2 120.6 683.0C122.3 680.8 128.6 676.5 130.0 675.4C131.4 674.3 133.7 671.2 134.8 672.0C135.9 672.8 139.4 681.2 141.0 683.0C142.6 684.8 148.5 688.1 150.7 689.7C152.9 691.3 160.9 698.0 163.4 699.0C165.9 700.0 173.9 699.2 176.0 700.0C178.1 700.8 182.6 706.1 184.0 707.0C185.4 707.9 188.6 706.2 189.7 708.7C190.8 711.2 194.0 728.6 195.0 732.5C196.0 736.4 198.6 746.1 200.0 748.0C201.4 749.9 207.5 750.7 209.4 751.5C211.3 752.3 217.1 755.8 219.0 756.0C220.9 756.2 226.5 754.6 228.4 754.0C230.3 753.4 236.2 749.7 238.0 750.0C239.8 750.3 244.8 756.0 246.2 756.9C247.7 757.8 251.5 759.3 252.5 759.4C253.5 759.5 255.2 758.0 256.2 758.0C257.2 758.0 261.2 759.5 262.5 759.8C263.8 760.0 267.6 760.2 268.8 760.0C269.9 759.8 273.0 757.6 273.8 757.5C274.5 757.4 275.3 757.0 276.2 758.8C277.2 760.5 281.5 773.5 283.1 775.0C284.7 776.5 291.3 774.0 292.5 773.8C293.7 773.5 292.9 775.1 295.0 773.0C297.1 770.9 311.2 754.9 313.8 753.0C316.2 751.1 318.2 754.4 320.0 754.0C321.8 753.6 328.9 750.2 331.2 749.4C333.6 748.6 341.8 746.1 343.8 745.6C345.8 745.1 350.0 745.2 351.2 744.4C352.5 743.6 354.7 739.0 356.0 737.4C357.3 735.8 363.3 729.7 364.6 728.7C365.9 727.7 368.1 727.7 369.0 727.0C369.9 726.3 373.1 721.6 374.0 721.8C374.9 722.0 377.6 727.2 378.4 728.7C379.2 730.2 380.9 735.7 381.9 736.5C382.9 737.3 387.0 736.1 388.0 736.5C389.0 736.9 391.1 739.6 392.0 740.0C392.9 740.4 396.3 740.1 397.4 740.8C398.5 741.5 400.3 744.9 402.6 746.9C404.9 748.9 418.2 759.5 420.8 760.7C423.4 761.9 427.0 759.5 428.6 759.0C430.2 758.5 435.7 755.7 437.0 755.5C438.3 755.3 440.0 754.4 441.6 757.3C443.2 760.1 450.8 781.6 452.8 784.0C454.8 786.4 460.3 781.5 461.5 781.5C462.7 781.5 464.0 781.9 465.0 784.0C466.0 786.1 470.3 799.6 471.8 802.2C473.3 804.8 478.7 809.0 480.0 810.0C481.3 811.0 483.2 814.2 485.0 812.0C486.8 809.8 495.0 792.2 497.5 787.5C500.0 782.8 507.5 767.8 510.0 765.0C512.5 762.2 520.2 760.4 522.5 760.0C524.8 759.6 530.5 759.0 532.5 761.0C534.5 763.0 540.8 775.4 542.5 780.0C544.2 784.6 548.2 803.5 550.0 807.5C551.8 811.5 558.0 819.5 560.0 820.0C562.0 820.5 568.0 814.2 570.0 812.5C572.0 810.8 578.2 804.8 580.0 802.5C581.8 800.2 585.9 792.1 587.5 790.0C589.1 787.9 594.4 781.8 596.0 781.0C597.6 780.2 601.9 779.1 604.0 782.5C606.1 785.9 614.4 810.5 617.5 815.0C620.6 819.5 632.5 826.8 635.0 827.0C637.5 827.2 641.0 819.5 642.5 817.5C644.0 815.5 648.4 807.1 650.0 807.5C651.6 807.9 656.5 820.5 659.0 821.0C661.5 821.5 672.9 813.9 675.0 812.5C677.1 811.1 678.0 809.8 680.0 807.5C682.0 805.2 692.0 793.2 695.0 790.0C698.0 786.8 707.2 777.8 710.0 775.0C712.8 772.2 720.5 764.6 722.5 762.5C724.5 760.4 727.8 754.0 730.0 753.8C732.2 753.5 742.5 758.1 745.0 760.0C747.5 761.9 753.0 770.2 755.0 772.5C757.0 774.8 762.2 781.4 765.0 782.5C767.8 783.6 779.5 784.6 782.5 783.8C785.5 782.9 792.2 776.4 795.0 773.8C797.8 771.1 807.5 760.3 810.0 757.5C812.5 754.7 818.0 748.8 820.0 746.0C822.0 743.2 828.0 734.6 830.0 730.0C832.0 725.4 838.2 703.5 840.0 700.0C841.8 696.5 845.8 695.4 847.5 695.0C849.2 694.6 856.0 695.6 857.5 696.0C859.0 696.4 861.5 698.5 862.5 698.8C863.5 699.0 866.2 697.3 867.5 698.0C868.8 698.7 873.2 705.0 875.0 705.8C876.8 706.5 883.0 704.1 885.0 706.0C887.0 707.9 893.2 723.0 895.0 725.0C896.8 727.0 901.0 724.9 902.5 725.5C904.0 726.1 907.9 730.7 910.0 731.0C912.1 731.3 921.8 728.0 923.8 728.8C925.8 729.5 927.9 736.6 930.0 738.8C932.1 740.9 942.8 748.0 945.0 750.0C947.2 752.0 950.5 757.8 952.5 758.8C954.5 759.8 962.2 760.4 965.0 760.0C967.8 759.6 977.5 755.6 980.0 755.0C982.5 754.4 987.8 754.0 990.0 753.8C992.2 753.5 1000.0 755.6 1002.5 752.5C1005.0 749.4 1013.2 725.1 1015.0 722.5C1016.8 719.9 1018.5 728.5 1020.0 726.0C1021.5 723.5 1027.5 702.1 1030.0 697.5C1032.5 692.9 1042.8 681.8 1045.0 680.0C1047.2 678.2 1050.8 679.2 1052.5 680.0C1054.2 680.8 1060.5 684.8 1062.5 687.5C1064.5 690.2 1070.8 704.8 1072.5 707.5C1074.2 710.2 1078.2 714.1 1080.0 715.0C1081.8 715.9 1088.0 715.5 1090.0 716.0C1092.0 716.5 1098.0 720.0 1100.0 720.5C1102.0 721.0 1108.0 718.8 1110.0 721.0C1112.0 723.2 1118.0 736.6 1120.0 742.5C1122.0 748.4 1128.2 775.6 1130.0 780.0C1131.8 784.4 1135.6 786.2 1137.5 786.0C1139.4 785.8 1147.0 778.0 1148.8 777.5C1150.5 777.0 1153.4 782.0 1155.0 781.0C1156.6 780.0 1162.5 771.1 1165.0 767.5C1167.5 763.9 1177.2 745.0 1180.0 745.0C1182.8 745.0 1190.5 764.5 1192.5 767.5C1194.5 770.5 1198.5 771.8 1200.0 775.0C1201.5 778.2 1206.0 796.9 1207.5 800.0C1209.0 803.1 1213.5 806.0 1215.0 806.0C1216.5 806.0 1220.8 801.9 1222.5 800.0C1224.2 798.1 1229.8 790.1 1232.5 787.5C1235.2 784.9 1247.2 776.2 1250.0 773.8C1252.8 771.2 1257.8 762.6 1260.0 762.5C1262.2 762.4 1270.5 771.5 1272.5 772.5C1274.5 773.5 1278.2 771.8 1280.0 772.5C1281.8 773.2 1288.0 778.5 1290.0 780.0C1292.0 781.5 1298.2 784.8 1300.0 787.5C1301.8 790.2 1305.8 804.6 1307.5 807.5C1309.2 810.4 1315.0 816.1 1317.5 816.0C1320.0 815.9 1330.0 808.6 1332.5 806.0C1335.0 803.4 1340.2 793.1 1342.5 790.0C1344.8 786.9 1353.0 776.4 1355.0 775.0C1357.0 773.6 1360.5 778.1 1362.5 776.0C1364.5 773.9 1373.2 756.0 1375.0 753.8C1376.8 751.5 1378.8 752.9 1380.0 753.8C1381.2 754.6 1385.7 762.3 1387.5 762.5C1389.3 762.7 1396.5 755.6 1398.5 756.0C1400.5 756.4 1406.2 765.0 1407.7 766.0C1409.2 767.0 1413.1 765.2 1414.0 766.0C1414.9 766.8 1416.1 773.1 1417.0 774.0C1417.9 774.9 1421.9 774.5 1423.0 775.4C1424.1 776.3 1426.8 782.8 1427.7 783.0C1428.6 783.2 1431.1 777.5 1432.0 777.5C1432.9 777.5 1435.7 779.0 1437.0 783.0C1438.3 787.0 1442.9 811.5 1444.6 817.0C1446.3 822.5 1452.5 835.6 1454.0 838.5C1455.5 841.4 1458.8 841.7 1460.0 846.0C1461.2 850.3 1464.8 875.5 1466.0 881.5C1467.2 887.5 1470.8 899.0 1472.0 906.0C1473.2 913.0 1477.4 947.7 1478.5 952.0C1479.6 956.3 1481.8 948.4 1483.0 949.0C1484.2 949.6 1489.6 957.9 1491.0 958.5C1492.4 959.1 1496.4 955.4 1497.0 955.0" fill="none" stroke="#00ff00" stroke-width="2.2" stroke-linejoin="round"/>
<text x="9" y="669" font-family="Liberation Sans" font-size="9.6" fill="#fff" textLength="167" lengthAdjust="spacingAndGlyphs">Ind_2 Line+1 -63.6886 -9.6060 -54.0826</text>
<text x="1734.4" y="674.5" font-family="Liberation Sans" font-size="13" fill="#00ff00" textLength="138" lengthAdjust="spacingAndGlyphs">1.00= XAGUSD =1.00</text>
<text x="1734.4" y="687.5" font-family="Liberation Sans" font-size="13" fill="#1e90ff" textLength="138" lengthAdjust="spacingAndGlyphs">0.51= XAUUSD =0.93</text>
<text x="1850" y="699.5" font-family="Liberation Sans" font-size="13" fill="#00ffff" textLength="22.5" lengthAdjust="spacingAndGlyphs">Flat</text>
<text x="1392.5" y="965" font-family="Liberation Sans" font-size="20" fill="#8a8a8a" fill-opacity="0.85" textLength="183" lengthAdjust="spacingAndGlyphs">Активация Windows</text>
<text x="1392" y="986" font-family="Liberation Sans" font-size="15" fill="#8a8a8a" fill-opacity="0.85" textLength="453" lengthAdjust="spacingAndGlyphs">Чтобы активировать Windows, перейдите в раздел "Параметры".</text></g>
<rect x="4.5" y="74.5" width="1873" height="254" fill="none" stroke="#fff" stroke-width="1" shape-rendering="crispEdges"/>
<rect x="4.5" y="330.5" width="1873" height="165" fill="none" stroke="#fff" stroke-width="1" shape-rendering="crispEdges"/>
<rect x="4.5" y="497.5" width="1873" height="157" fill="none" stroke="#fff" stroke-width="1" shape-rendering="crispEdges"/>
<path d="M4.5 974.5V656.5H1877.5V974.5" fill="none" stroke="#fff" shape-rendering="crispEdges"/>
<rect x="4" y="974" width="1874" height="1" fill="#fff"/>
<path d="M5.5 975V978M69.5 975V978M133.5 975V978M197.5 975V978M261.5 975V978M325.5 975V978M389.5 975V978M453.5 975V978M517.5 975V978M581.5 975V978M645.5 975V978M709.5 975V978M773.5 975V978M837.5 975V978M901.5 975V978M965.5 975V978M1029.5 975V978M1093.5 975V978M1157.5 975V978M1221.5 975V978M1285.5 975V978M1349.5 975V978M1413.5 975V978M1477.5 975V978M1541.5 975V978M1605.5 975V978M1669.5 975V978M1733.5 975V978M1797.5 975V978" stroke="#fff" shape-rendering="crispEdges"/>
<text x="5" y="987" font-family="Liberation Sans" font-size="9.6" fill="#fff" textLength="51.3" lengthAdjust="spacingAndGlyphs">12 Mar 2025</text>
<text x="69" y="987" font-family="Liberation Sans" font-size="9.6" fill="#fff" textLength="55" lengthAdjust="spacingAndGlyphs">13 Mar 08:00</text>
<text x="133" y="987" font-family="Liberation Sans" font-size="9.6" fill="#fff" textLength="55" lengthAdjust="spacingAndGlyphs">14 Mar 01:00</text>
<text x="197" y="987" font-family="Liberation Sans" font-size="9.6" fill="#fff" textLength="55" lengthAdjust="spacingAndGlyphs">14 Mar 17:00</text>
<text x="261" y="987" font-family="Liberation Sans" font-size="9.6" fill="#fff" textLength="55" lengthAdjust="spacingAndGlyphs">17 Mar 10:00</text>
<text x="325" y="987" font-family="Liberation Sans" font-size="9.6" fill="#fff" textLength="55" lengthAdjust="spacingAndGlyphs">18 Mar 03:00</text>
<text x="389" y="987" font-family="Liberation Sans" font-size="9.6" fill="#fff" textLength="55" lengthAdjust="spacingAndGlyphs">18 Mar 19:00</text>
<text x="453" y="987" font-family="Liberation Sans" font-size="9.6" fill="#fff" textLength="55" lengthAdjust="spacingAndGlyphs">19 Mar 12:00</text>
<text x="517" y="987" font-family="Liberation Sans" font-size="9.6" fill="#fff" textLength="55" lengthAdjust="spacingAndGlyphs">20 Mar 05:00</text>
<text x="581" y="987" font-family="Liberation Sans" font-size="9.6" fill="#fff" textLength="55" lengthAdjust="spacingAndGlyphs">20 Mar 21:00</text>
<text x="645" y="987" font-family="Liberation Sans" font-size="9.6" fill="#fff" textLength="55" lengthAdjust="spacingAndGlyphs">21 Mar 14:00</text>
<text x="709" y="987" font-family="Liberation Sans" font-size="9.6" fill="#fff" textLength="55" lengthAdjust="spacingAndGlyphs">24 Mar 07:00</text>
<text x="773" y="987" font-family="Liberation Sans" font-size="9.6" fill="#fff" textLength="55" lengthAdjust="spacingAndGlyphs">25 Mar 00:00</text>
<text x="837" y="987" font-family="Liberation Sans" font-size="9.6" fill="#fff" textLength="55" lengthAdjust="spacingAndGlyphs">25 Mar 16:00</text>
<text x="901" y="987" font-family="Liberation Sans" font-size="9.6" fill="#fff" textLength="55" lengthAdjust="spacingAndGlyphs">26 Mar 09:00</text>
<text x="965" y="987" font-family="Liberation Sans" font-size="9.6" fill="#fff" textLength="55" lengthAdjust="spacingAndGlyphs">27 Mar 02:00</text>
<text x="1029" y="987" font-family="Liberation Sans" font-size="9.6" fill="#fff" textLength="55" lengthAdjust="spacingAndGlyphs">27 Mar 18:00</text>
<text x="1093" y="987" font-family="Liberation Sans" font-size="9.6" fill="#fff" textLength="55" lengthAdjust="spacingAndGlyphs">28 Mar 11:00</text>
<text x="1157" y="987" font-family="Liberation Sans" font-size="9.6" fill="#fff" textLength="55" lengthAdjust="spacingAndGlyphs">31 Mar 05:00</text>
<text x="1221" y="987" font-family="Liberation Sans" font-size="9.6" fill="#fff" textLength="55" lengthAdjust="spacingAndGlyphs">31 Mar 21:00</text>
<text x="1285" y="987" font-family="Liberation Sans" font-size="9.6" fill="#fff" textLength="49" lengthAdjust="spacingAndGlyphs">1 Apr 14:00</text>
<text x="1349" y="987" font-family="Liberation Sans" font-size="9.6" fill="#fff" textLength="49" lengthAdjust="spacingAndGlyphs">2 Apr 07:00</text>
<text x="1413" y="987" font-family="Liberation Sans" font-size="9.6" fill="#fff" textLength="49" lengthAdjust="spacingAndGlyphs">2 Apr 23:00</text>
<text x="1477" y="987" font-family="Liberation Sans" font-size="9.6" fill="#fff" textLength="49" lengthAdjust="spacingAndGlyphs">3 Apr 16:00</text>
<rect x="1878" y="94" width="2" height="1" fill="#fff"/>
<text x="1883" y="98" font-family="Liberation Sans" font-size="9.6" fill="#fff" textLength="27" lengthAdjust="spacingAndGlyphs">35.250</text>
<rect x="1878" y="127" width="2" height="1" fill="#fff"/>
<text x="1883" y="131" font-family="Liberation Sans" font-size="9.6" fill="#fff" textLength="27" lengthAdjust="spacingAndGlyphs">34.470</text>
<rect x="1878" y="160" width="2" height="1" fill="#fff"/>
<text x="1883" y="164" font-family="Liberation Sans" font-size="9.6" fill="#fff" textLength="27" lengthAdjust="spacingAndGlyphs">33.690</text>
<rect x="1878" y="193" width="2" height="1" fill="#fff"/>
<text x="1883" y="197" font-family="Liberation Sans" font-size="9.6" fill="#fff" textLength="27" lengthAdjust="spacingAndGlyphs">32.930</text>
<rect x="1878" y="226" width="2" height="1" fill="#fff"/>
<text x="1883" y="230" font-family="Liberation Sans" font-size="9.6" fill="#fff" textLength="27" lengthAdjust="spacingAndGlyphs">32.150</text>
<rect x="1878" y="259" width="2" height="1" fill="#fff"/>
<text x="1883" y="263" font-family="Liberation Sans" font-size="9.6" fill="#fff" textLength="27" lengthAdjust="spacingAndGlyphs">31.370</text>
<rect x="1878" y="292" width="2" height="1" fill="#fff"/>
<text x="1883" y="296" font-family="Liberation Sans" font-size="9.6" fill="#fff" textLength="27" lengthAdjust="spacingAndGlyphs">30.610</text>
<rect x="1878" y="325" width="2" height="1" fill="#fff"/>
<text x="1883" y="329" font-family="Liberation Sans" font-size="9.6" fill="#fff" textLength="27" lengthAdjust="spacingAndGlyphs">29.830</text>
<rect x="1879" y="230" width="37" height="11" fill="#fff"/>
<text x="1883" y="239.5" font-family="Liberation Sans" font-size="9.6" fill="#000" textLength="27" lengthAdjust="spacingAndGlyphs">31.941</text>
<text x="1882" y="342" font-family="Liberation Sans" font-size="9.6" fill="#fff" textLength="38" lengthAdjust="spacingAndGlyphs">-124331.</text>
<text x="1882" y="492.5" font-family="Liberation Sans" font-size="9.6" fill="#fff" textLength="34" lengthAdjust="spacingAndGlyphs">-152690</text>
<text x="1881" y="508" font-family="Liberation Sans" font-size="9.6" fill="#fff" textLength="39" lengthAdjust="spacingAndGlyphs">11030.52</text>
<rect x="1879" y="507" width="39" height="11" fill="#32cd32"/>
<text x="1883" y="516.5" font-family="Liberation Sans" font-size="9.6" fill="#000" textLength="36" lengthAdjust="spacingAndGlyphs">10896.50</text>
<text x="1881" y="651" font-family="Liberation Sans" font-size="9.6" fill="#fff" textLength="33" lengthAdjust="spacingAndGlyphs">9555.98</text>
<text x="1881" y="667.5" font-family="Liberation Sans" font-size="9.6" fill="#fff" textLength="34" lengthAdjust="spacingAndGlyphs">35.0799</text>
<text x="1881" y="767" font-family="Liberation Sans" font-size="9.6" fill="#fff" textLength="18" lengthAdjust="spacingAndGlyphs">0.00</text>
<text x="1881" y="971" font-family="Liberation Sans" font-size="9.6" fill="#fff" textLength="36" lengthAdjust="spacingAndGlyphs">-70.1047</text>
<rect x="1878" y="332" width="2" height="1" fill="#fff"/>
<rect x="1878" y="494" width="2" height="1" fill="#fff"/>
<rect x="1878" y="499" width="2" height="1" fill="#fff"/>
<rect x="1878" y="653" width="2" height="1" fill="#fff"/>
<rect x="1878" y="658" width="2" height="1" fill="#fff"/>
<rect x="1878" y="763" width="2" height="1" fill="#fff"/>
<rect x="1878" y="973" width="2" height="1" fill="#fff"/>
</svg>
<div style="position:absolute;left:0;top:997px;width:1920px;height:1px;background:#000"></div>
<div style="position:absolute;left:0;top:998px;width:1920px;height:1px;background:#fff"></div>
<div style="position:absolute;left:0;top:999px;width:1920px;height:18px;background:#f0f0f0"></div>
<div style="position:absolute;left:0;top:998px;width:1px;height:18px;background:#a0a0a0"></div>
<div style="position:absolute;left:1px;top:998px;width:1px;height:18px;background:#696969"></div>
<div style="position:absolute;left:2px;top:998px;width:1px;height:18px;background:#fff"></div>
<div style="position:absolute;left:0;top:1017px;width:1920px;height:1px;background:#fff"></div>
<div style="position:absolute;left:0;top:1018px;width:1920px;height:22px;background:#f0f0f0"></div>
<div style="position:absolute;left:454px;top:995px;width:92px;height:21px;background:#fff;border:1px solid #000;border-top:none;box-sizing:border-box"></div>
<div style="position:absolute;left:98px;top:1001px;width:1px;height:12px;background:#404040"></div>
<div style="position:absolute;left:190px;top:1001px;width:1px;height:12px;background:#404040"></div>
<div style="position:absolute;left:282px;top:1001px;width:1px;height:12px;background:#404040"></div>
<div style="position:absolute;left:362px;top:1001px;width:1px;height:12px;background:#404040"></div>
<div style="position:absolute;left:642px;top:1001px;width:1px;height:12px;background:#404040"></div>
<div style="position:absolute;left:734px;top:1001px;width:1px;height:12px;background:#404040"></div>
<div style="position:absolute;left:818px;top:1001px;width:1px;height:12px;background:#404040"></div>
<div style="position:absolute;left:910px;top:1001px;width:1px;height:12px;background:#404040"></div>
<div style="position:absolute;left:998px;top:1001px;width:1px;height:12px;background:#404040"></div>
<div style="position:absolute;left:1091px;top:1001px;width:1px;height:12px;background:#404040"></div>
<div style="position:absolute;left:1186px;top:1001px;width:1px;height:12px;background:#404040"></div>
<div style="position:absolute;left:1254px;top:1001px;width:1px;height:12px;background:#404040"></div>
<div style="position:absolute;left:1350px;top:1001px;width:1px;height:12px;background:#404040"></div>
<div style="position:absolute;left:1446px;top:1001px;width:1px;height:12px;background:#404040"></div>
<div style="position:absolute;left:1526px;top:1001px;width:1px;height:12px;background:#404040"></div>
<div style="position:absolute;left:1606px;top:1001px;width:1px;height:12px;background:#404040"></div>
<div style="position:absolute;left:1694px;top:1001px;width:1px;height:12px;background:#404040"></div>
<div style="position:absolute;left:1770px;top:1001px;width:1px;height:12px;background:#404040"></div>
<div style="position:absolute;left:1838px;top:1001px;width:1px;height:12px;background:#404040"></div>
<div style="position:absolute;left:16px;top:1000px;font:12px 'Liberation Sans', sans-serif;color:#555555;white-space:nowrap;transform-origin:0 0;transform:scaleX(0.942)">USDCHF,M30</div>
<div style="position:absolute;left:109px;top:1000px;font:12px 'Liberation Sans', sans-serif;color:#555555;white-space:nowrap;transform-origin:0 0;transform:scaleX(0.910)">EURGBP,M30</div>
<div style="position:absolute;left:201px;top:1000px;font:12px 'Liberation Sans', sans-serif;color:#555555;white-space:nowrap;transform-origin:0 0;transform:scaleX(0.905)">GBPUSD,M30</div>
<div style="position:absolute;left:293px;top:1000px;font:12px 'Liberation Sans', sans-serif;color:#555555;white-space:nowrap;transform-origin:0 0;transform:scaleX(0.915)">US500,M30</div>
<div style="position:absolute;left:373px;top:1000px;font:12px 'Liberation Sans', sans-serif;color:#555555;white-space:nowrap;transform-origin:0 0;transform:scaleX(0.905)">COPPER,M30</div>
<div style="position:absolute;left:464px;top:1000px;font:12px 'Liberation Sans', sans-serif;color:#000;white-space:nowrap;transform-origin:0 0;transform:scaleX(0.918)">XAGUSD,M30</div>
<div style="position:absolute;left:558px;top:1000px;font:12px 'Liberation Sans', sans-serif;color:#555555;white-space:nowrap;transform-origin:0 0;transform:scaleX(0.939)">GBPNZD,M30</div>
<div style="position:absolute;left:653px;top:1000px;font:12px 'Liberation Sans', sans-serif;color:#555555;white-space:nowrap;transform-origin:0 0;transform:scaleX(0.905)">COPPER,M30</div>
<div style="position:absolute;left:744px;top:1000px;font:12px 'Liberation Sans', sans-serif;color:#555555;white-space:nowrap;transform-origin:0 0;transform:scaleX(0.891)">EURUSD,M5</div>
<div style="position:absolute;left:829px;top:1000px;font:12px 'Liberation Sans', sans-serif;color:#555555;white-space:nowrap;transform-origin:0 0;transform:scaleX(0.910)">EURGBP,M30</div>
<div style="position:absolute;left:921px;top:1000px;font:12px 'Liberation Sans', sans-serif;color:#555555;white-space:nowrap;transform-origin:0 0;transform:scaleX(0.897)">GBPJPY,M30</div>
<div style="position:absolute;left:1008.3px;top:1000px;font:12px 'Liberation Sans', sans-serif;color:#555555;white-space:nowrap;transform-origin:0 0;transform:scaleX(0.936)">GBPCHF,M30</div>
<div style="position:absolute;left:1101.8px;top:1000px;font:12px 'Liberation Sans', sans-serif;color:#555555;white-space:nowrap;transform-origin:0 0;transform:scaleX(0.933)">AUDUSD,M30</div>
<div style="position:absolute;left:1197px;top:1000px;font:12px 'Liberation Sans', sans-serif;color:#555555;white-space:nowrap;transform-origin:0 0;transform:scaleX(0.953)">WTI,M30</div>
<div style="position:absolute;left:1266.2px;top:1000px;font:12px 'Liberation Sans', sans-serif;color:#555555;white-space:nowrap;transform-origin:0 0;transform:scaleX(0.931)">USDCAD,M30</div>
<div style="position:absolute;left:1361.8px;top:1000px;font:12px 'Liberation Sans', sans-serif;color:#555555;white-space:nowrap;transform-origin:0 0;transform:scaleX(0.932)">AUDUSD,M30</div>
<div style="position:absolute;left:1457.4px;top:1000px;font:12px 'Liberation Sans', sans-serif;color:#555555;white-space:nowrap;transform-origin:0 0;transform:scaleX(0.909)">US500,M30</div>
<div style="position:absolute;left:1536px;top:1000px;font:12px 'Liberation Sans', sans-serif;color:#555555;white-space:nowrap;transform-origin:0 0;transform:scaleX(0.923)">NAS100,H1</div>
<div style="position:absolute;left:1617.5px;top:1000px;font:12px 'Liberation Sans', sans-serif;color:#555555;white-space:nowrap;transform-origin:0 0;transform:scaleX(0.951)">WHEAT,M30</div>
<div style="position:absolute;left:1705.5px;top:1000px;font:12px 'Liberation Sans', sans-serif;color:#555555;white-space:nowrap;transform-origin:0 0;transform:scaleX(0.949)">CORN,M5</div>
<div style="position:absolute;left:1781.4px;top:1000px;font:12px 'Liberation Sans', sans-serif;color:#555555;white-space:nowrap;transform-origin:0 0;transform:scaleX(0.937)">WTI,M30</div>
<div style="position:absolute;left:1848.3px;top:1000px;font:12px 'Liberation Sans', sans-serif;color:#555555;white-space:nowrap;transform-origin:0 0;transform:scaleX(0.939)">NG,M1</div>
<div style="position:absolute;left:1885px;top:999px;width:35px;height:18px;background:#f0f0f0"></div>
<svg style="position:absolute;left:1880px;top:1002px" width="40" height="12"><polygon points="8,6 12,2 12,10" fill="#000"/><polygon points="27,2 31,6 27,10" fill="#000"/></svg>
<div style="position:absolute;left:2px;top:1023px;font:12px 'Liberation Sans', sans-serif;color:#000;white-space:nowrap;transform-origin:0 0;transform:scaleX(0.976)">Для вызова справки нажмите F1</div>
<div style="position:absolute;left:1207px;top:1020px;width:1px;height:19px;background:#a0a0a0"></div>
<div style="position:absolute;left:1323px;top:1020px;width:1px;height:19px;background:#a0a0a0"></div>
<div style="position:absolute;left:1425px;top:1020px;width:1px;height:19px;background:#a0a0a0"></div>
<div style="position:absolute;left:1496px;top:1020px;width:1px;height:19px;background:#a0a0a0"></div>
<div style="position:absolute;left:1568px;top:1020px;width:1px;height:19px;background:#a0a0a0"></div>
<div style="position:absolute;left:1635px;top:1020px;width:1px;height:19px;background:#a0a0a0"></div>
<div style="position:absolute;left:1705px;top:1020px;width:1px;height:19px;background:#a0a0a0"></div>
<div style="position:absolute;left:1771px;top:1020px;width:1px;height:19px;background:#a0a0a0"></div>
<div style="position:absolute;left:1213px;top:1023px;font:12px 'Liberation Sans', sans-serif;color:#000;white-space:nowrap">Default</div>
<svg style="position:absolute;left:1776px;top:1022px" width="24" height="16"><rect x="0.0" y="1" width="1.6" height="14" fill="#3a8a10"/><rect x="2.6" y="1" width="1.6" height="14" fill="#3a8a10"/><rect x="5.2" y="1" width="1.6" height="14" fill="#3a8a10"/><rect x="7.8" y="1" width="1.6" height="14" fill="#3a8a10"/><rect x="10.4" y="1" width="1.6" height="14" fill="#3a8a10"/><rect x="13.0" y="1" width="1.6" height="14" fill="#3a8a10"/><rect x="15.6" y="1" width="1.6" height="14" fill="#1a3a8a"/><rect x="18.2" y="1" width="1.6" height="14" fill="#1a3a8a"/><rect x="20.8" y="1" width="1.6" height="14" fill="#1a3a8a"/></svg>
<div style="position:absolute;left:1804px;top:1023px;font:12px 'Liberation Sans', sans-serif;color:#000;white-space:nowrap">433387/163 kb</div>
</body></html>
